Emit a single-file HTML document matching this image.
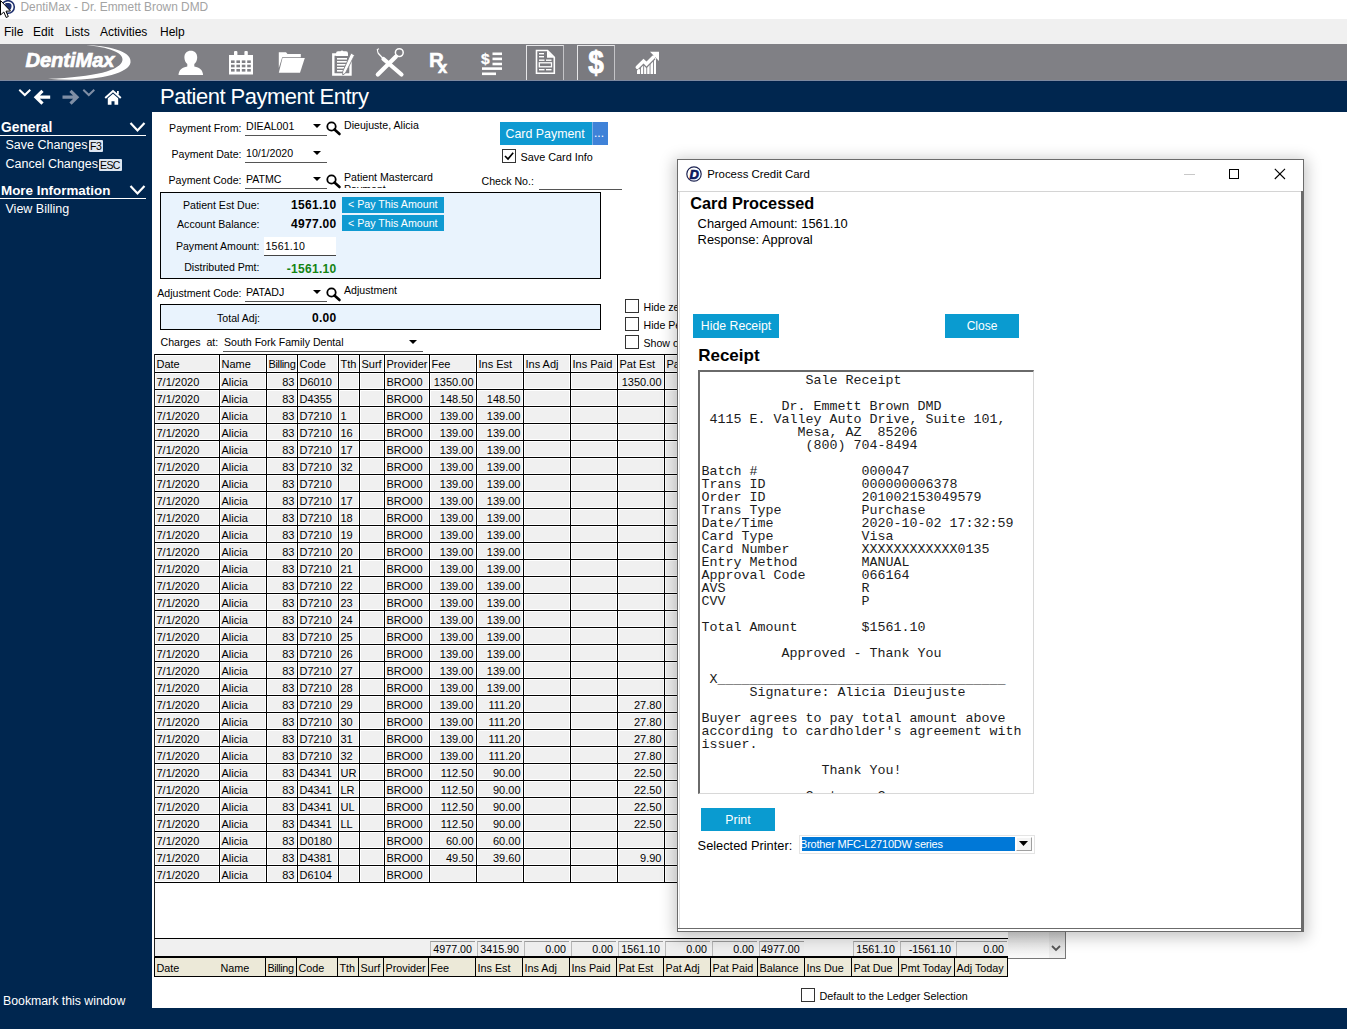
<!DOCTYPE html>
<html><head><meta charset="utf-8"><title>DentiMax</title>
<style>
html,body{margin:0;padding:0;}
body{width:1347px;height:1029px;overflow:hidden;position:relative;background:#fff;font-family:'Liberation Sans',sans-serif;}
.t{position:absolute;white-space:pre;}
.b{position:absolute;box-sizing:border-box;}
.c{position:absolute;box-sizing:border-box;height:16px;background:#f0f0f0;border:1px solid #fff;}
.g{position:absolute;white-space:pre;font-size:11px;line-height:11px;color:#000;}
svg{position:absolute;overflow:visible;}
</style></head><body>
<div class="b" style="left:0px;top:0px;width:1347px;height:19px;background:#fff;"></div>
<div class="t" style="left:20.5px;top:1.92px;font-family:'Liberation Sans', sans-serif;font-size:11.9px;line-height:11.9px;color:#a3a3a3;">DentiMax - Dr. Emmett Brown DMD</div>
<svg style="left:0;top:0" width="20" height="20" viewBox="0 0 20 20">
<circle cx="8" cy="7" r="6.3" fill="#fff" stroke="#1d2f6e" stroke-width="1.6"/>
<path d="M5.5 3 L9 3 Q12 3.5 11.5 7 Q11 10.5 7.5 11 L4 11 Z" fill="#1d2f6e"/>
<path d="M0.5 0.5 L0.5 15 L3.8 12 L6.2 17.5 L8.3 16.5 L6 11.2 L10.5 11 Z" fill="#fff" stroke="#000" stroke-width="1"/>
</svg>
<div class="b" style="left:0px;top:19px;width:1347px;height:25px;background:#f0f0f0;"></div>
<div class="t" style="left:4px;top:25.84px;font-family:'Liberation Sans', sans-serif;font-size:12px;line-height:12px;color:#000;">File</div>
<div class="t" style="left:33px;top:25.84px;font-family:'Liberation Sans', sans-serif;font-size:12px;line-height:12px;color:#000;">Edit</div>
<div class="t" style="left:65px;top:25.84px;font-family:'Liberation Sans', sans-serif;font-size:12px;line-height:12px;color:#000;">Lists</div>
<div class="t" style="left:100px;top:25.84px;font-family:'Liberation Sans', sans-serif;font-size:12px;line-height:12px;color:#000;">Activities</div>
<div class="t" style="left:160px;top:25.84px;font-family:'Liberation Sans', sans-serif;font-size:12px;line-height:12px;color:#000;">Help</div>
<div class="b" style="left:0px;top:44px;width:1347px;height:36px;background:#808085;"></div>
<div class="b" style="left:0px;top:80px;width:1347px;height:949px;background:#00264f;"></div>
<div class="b" style="left:0px;top:80px;width:1347px;height:1px;background:#7c89a0;"></div>
<div class="b" style="left:0px;top:81px;width:1347px;height:1px;background:#02214a;"></div>
<div class="b" style="left:152px;top:112px;width:1195px;height:896px;background:#fff;"></div>
<svg style="left:0;top:44px" width="150" height="36" viewBox="0 44 150 36">
<path d="M48 78.8 C 90 82.5, 128.5 75, 130.5 62.5 C 132 53, 116 46.5, 86 45 C 108 47, 123.5 52.5, 122.5 60 C 121 70.5, 95 77, 48 78.8 Z" fill="#fff"/>
<text x="25.5" y="66.5" font-family="Liberation Sans" font-weight="700" font-style="italic" font-size="20" fill="#fff" stroke="#fff" stroke-width="0.7" letter-spacing="-0.1" textLength="89" lengthAdjust="spacingAndGlyphs">DentiMax</text>
</svg>
<svg style="left:178px;top:50px" width="26" height="26" viewBox="0 0 26 26">
<path d="M0.5 25 C 0.8 20, 4 17.3, 9.3 16.5 L 9.3 14 C 7.5 12.5, 6.4 10, 6.4 7.5 C 6.4 3.2, 9 0.8, 12.8 0.8 C 16.6 0.8, 19.2 3.2, 19.2 7.5 C 19.2 10, 18.1 12.5, 16.3 14 L 16.3 16.5 C 21.6 17.3, 24.8 20, 25.1 25 Z" fill="#fff"/>
</svg>
<svg style="left:229px;top:51px" width="25" height="24" viewBox="0 0 25 24"><rect x="0" y="4" width="24" height="19.5" fill="#fff"/><rect x="5" y="0" width="3.4" height="5" rx="1" fill="#fff"/><rect x="15.4" y="0" width="3.4" height="5" rx="1" fill="#fff"/><rect x="2.0" y="9.4" width="3.6" height="2.6" fill="#808085"/><rect x="7.4" y="9.4" width="3.6" height="2.6" fill="#808085"/><rect x="12.8" y="9.4" width="3.6" height="2.6" fill="#808085"/><rect x="18.2" y="9.4" width="3.6" height="2.6" fill="#808085"/><rect x="2.0" y="13.7" width="3.6" height="2.6" fill="#808085"/><rect x="7.4" y="13.7" width="3.6" height="2.6" fill="#808085"/><rect x="12.8" y="13.7" width="3.6" height="2.6" fill="#808085"/><rect x="18.2" y="13.7" width="3.6" height="2.6" fill="#808085"/><rect x="2.0" y="18.0" width="3.6" height="2.6" fill="#808085"/><rect x="7.4" y="18.0" width="3.6" height="2.6" fill="#808085"/><rect x="12.8" y="18.0" width="3.6" height="2.6" fill="#808085"/><rect x="18.2" y="18.0" width="3.6" height="2.6" fill="#808085"/></svg>
<svg style="left:278px;top:52px" width="28" height="22" viewBox="0 0 28 22">
<path d="M0.8 0.3 L8 0.3 L9.5 2 L22.8 2 L22.8 5.2 L4.2 5.2 L0.8 16 Z" fill="#fff"/>
<path d="M4.5 6 L26.8 6 L22 20.7 L0.8 20.7 Z" fill="#fff"/>
</svg>
<svg style="left:331px;top:49px" width="24" height="28" viewBox="0 0 24 28">
<path d="M19.5 12 L19.5 25.5 L2.3 25.5 L2.3 5.5 L5 5.5" fill="none" stroke="#fff" stroke-width="2.4"/>
<path d="M5 4.5 Q5 2.3 7 2.3 L9.5 2.3 Q11 0.5 12.5 2.3 L15 2.3 Q17 2.3 17 4.5 L17 7 L5 7 Z" fill="#fff"/>
<rect x="6" y="9" width="10" height="1.6" fill="#fff"/><rect x="6" y="12" width="10" height="1.6" fill="#fff"/>
<rect x="6" y="15" width="10" height="1.6" fill="#fff"/><rect x="6" y="18" width="9" height="1.6" fill="#fff"/><rect x="6" y="21" width="8" height="1.6" fill="#fff"/>
<path d="M20 4 L23.5 6.2 L14.5 24 L11.8 26 L11.6 22.8 Z" fill="#fff" stroke="#808085" stroke-width="0.9"/>
</svg>
<svg style="left:375px;top:48px" width="30" height="30" viewBox="0 0 30 30">
<path d="M2.8 26.5 L21 8.5" stroke="#fff" stroke-width="4.2" stroke-linecap="round"/>
<path d="M8.5 11 L26.5 26.5" stroke="#fff" stroke-width="4.2" stroke-linecap="round"/>
<path d="M8.5 11 L3 5" stroke="#fff" stroke-width="1.3"/>
<path d="M3 5 L2.3 1.5 L4 0.8" stroke="#fff" stroke-width="1.1" fill="none"/>
<path d="M21 8.5 L22 7.5" stroke="#fff" stroke-width="1.5"/>
<circle cx="24.3" cy="4.6" r="3.9" fill="none" stroke="#fff" stroke-width="1.5"/>
</svg>
<svg style="left:428px;top:50px" width="26" height="26" viewBox="0 0 26 26">
<text x="1" y="16.7" font-family="Liberation Sans" font-weight="700" font-size="20.5" fill="#fff" stroke="#fff" stroke-width="0.5">R</text>
<text x="10" y="23" font-family="Liberation Sans" font-weight="700" font-size="16.5" fill="#fff" stroke="#fff" stroke-width="0.6">x</text>
</svg>
<svg style="left:480px;top:49px" width="24" height="28" viewBox="0 0 24 28">
<text x="1" y="15.2" font-family="Liberation Sans" font-weight="700" font-size="15.5" fill="#fff" stroke="#fff" stroke-width="0.3">$</text>
<rect x="12.5" y="3.5" width="9.5" height="2.6" fill="#fff"/><rect x="12.5" y="8.6" width="9.5" height="2.6" fill="#fff"/><rect x="12.5" y="13.7" width="9.5" height="2.6" fill="#fff"/>
<rect x="2" y="18.3" width="20" height="2.6" fill="#fff"/><rect x="2" y="23.5" width="14" height="2.6" fill="#fff"/>
</svg>
<div class="b" style="left:526px;top:45px;width:38px;height:35px;background:#7a7a7f;border-left:1px solid #e6e6e8;border-top:1px solid #e6e6e8;border-right:1px solid #c4c4c7;"></div>
<div class="b" style="left:577px;top:45px;width:38px;height:35px;background:#7a7a7f;border-left:1px solid #e6e6e8;border-top:1px solid #e6e6e8;border-right:1px solid #c4c4c7;"></div>
<svg style="left:535px;top:49px" width="22" height="26" viewBox="0 0 22 26">
<path d="M1.5 1.5 L12.5 1.5 L19.3 8.3 L19.3 24.3 L1.5 24.3 Z" fill="none" stroke="#fff" stroke-width="1.6"/>
<path d="M12 1.5 L19.3 8.8 L12 8.8 Z" fill="#fff"/>
<rect x="4" y="4" width="5" height="1.4" fill="#fff"/><rect x="4" y="7" width="5" height="1.4" fill="#fff"/>
<rect x="4" y="10.5" width="5.5" height="1.4" fill="#fff"/><rect x="11" y="10.5" width="5.5" height="1.4" fill="#fff"/>
<rect x="4.3" y="13.8" width="12.2" height="4" fill="none" stroke="#fff" stroke-width="1.3"/>
<rect x="4" y="20" width="5.5" height="1.4" fill="#fff"/><rect x="11" y="20" width="5.5" height="1.4" fill="#fff"/>
</svg>
<svg style="left:586.5px;top:46px" width="22" height="34" viewBox="0 0 22 34">
<text x="1.2" y="26.5" font-family="Liberation Sans" font-weight="700" font-size="31" fill="#fff" stroke="#fff" stroke-width="0.9" textLength="15.5" lengthAdjust="spacingAndGlyphs">$</text>
</svg>
<svg style="left:634px;top:50px" width="27" height="26" viewBox="634 50 27 26">
<path d="M637 74 L637 70.5 L643.5 64 L646.5 67 L656 57.5 L656 74 Z" fill="#fff"/>
<rect x="640" y="62" width="0.9" height="13" fill="#808085"/><rect x="643.2" y="62" width="0.9" height="13" fill="#808085"/>
<rect x="646.3" y="62" width="0.9" height="13" fill="#808085"/><rect x="649.6" y="58" width="0.9" height="17" fill="#808085"/><rect x="653" y="56" width="0.9" height="19" fill="#808085"/>
<path d="M637.3 67.5 L643.5 61.3 L646.5 64.3 L653.5 57.3" stroke="#808085" stroke-width="5.5" fill="none"/>
<path d="M637.3 67.3 L643.5 61.1 L646.5 64.1 L653.5 57.1" stroke="#fff" stroke-width="3.5" fill="none" stroke-linecap="round"/>
<path d="M650 51.8 L659 51.8 L659 61 Z" fill="#fff"/>
</svg>
<svg style="left:15px;top:86px" width="110" height="22" viewBox="0 0 110 22">
<path d="M4.3 3.8 L9.8 9 L15.3 3.8" stroke="#fff" stroke-width="2" fill="none"/>
<path d="M35.2 11.2 L21.5 11.2 M27.5 4.8 L21 11.2 L27.5 17.6" stroke="#fff" stroke-width="3.2" fill="none"/>
<path d="M47.5 11.2 L61.5 11.2 M55.5 4.8 L62 11.2 L55.5 17.6" stroke="#7f8ea5" stroke-width="3.2" fill="none"/>
<path d="M68.3 3.8 L73.8 9 L79.3 3.8" stroke="#7f8ea5" stroke-width="2" fill="none"/>
<path d="M90.2 12 L98 5 L105.8 12" stroke="#fff" stroke-width="2" fill="none"/>
<path d="M92.8 12.3 L98 7.8 L103.2 12.3 L103.2 18.8 L99.5 18.8 L99.5 15.3 L96.5 15.3 L96.5 18.8 L92.8 18.8 Z" fill="#fff"/>
<rect x="102" y="5" width="1.8" height="3.5" fill="#fff"/>
</svg>
<div class="t" style="left:160px;top:85.97px;font-family:'Liberation Sans', sans-serif;font-size:22px;line-height:22px;color:#fff;letter-spacing:-0.5px;">Patient Payment Entry</div>
<div class="t" style="left:1px;top:120.91px;font-family:'Liberation Sans', sans-serif;font-size:13.8px;line-height:13.8px;color:#fff;font-weight:700;">General</div>
<div class="b" style="left:0px;top:135px;width:146px;height:1px;background:#fff;"></div>
<svg style="left:129px;top:121px" width="18" height="12" viewBox="0 0 18 12"><path d="M1.5 2 L8.5 9.5 L15.5 2" stroke="#fff" stroke-width="2.2" fill="none"/></svg>
<div class="t" style="left:5.5px;top:139.11px;font-family:'Liberation Sans', sans-serif;font-size:12.5px;line-height:12.5px;color:#fff;">Save Changes</div>
<div class="b" style="left:89px;top:140px;width:14px;height:12px;background:#dde5f0;border-radius:1px;"></div>
<div class="t" style="left:90px;top:141.11px;font-family:'Liberation Sans', sans-serif;font-size:10.5px;line-height:10.5px;color:#000;letter-spacing:-0.5px;">F3</div>
<div class="t" style="left:5.5px;top:158.41px;font-family:'Liberation Sans', sans-serif;font-size:12.5px;line-height:12.5px;color:#fff;">Cancel Changes</div>
<div class="b" style="left:99px;top:159px;width:23px;height:12px;background:#dde5f0;border-radius:1px;"></div>
<div class="t" style="left:100px;top:160.11px;font-family:'Liberation Sans', sans-serif;font-size:10.5px;line-height:10.5px;color:#000;letter-spacing:-0.6px;">ESC</div>
<div class="t" style="left:1px;top:184.15px;font-family:'Liberation Sans', sans-serif;font-size:13.4px;line-height:13.4px;color:#fff;font-weight:700;">More Information</div>
<div class="b" style="left:0px;top:198px;width:146px;height:1px;background:#fff;"></div>
<svg style="left:129px;top:184px" width="18" height="12" viewBox="0 0 18 12"><path d="M1.5 2 L8.5 9.5 L15.5 2" stroke="#fff" stroke-width="2.2" fill="none"/></svg>
<div class="t" style="left:5.5px;top:202.61px;font-family:'Liberation Sans', sans-serif;font-size:12.5px;line-height:12.5px;color:#fff;">View Billing</div>
<div class="t" style="left:3px;top:994.58px;font-family:'Liberation Sans', sans-serif;font-size:12.3px;line-height:12.3px;color:#fff;">Bookmark this window</div>
<div class="t" style="left:151.5px;width:90px;text-align:right;top:123.32px;font-family:'Liberation Sans', sans-serif;font-size:10.6px;line-height:10.6px;color:#000;">Payment From:</div>
<div class="t" style="left:246px;top:121.22px;font-family:'Liberation Sans', sans-serif;font-size:10.6px;line-height:10.6px;color:#000;">DIEAL001</div>
<div class="b" style="left:245px;top:135px;width:82px;height:1px;background:#555;"></div>
<svg style="left:313.0px;top:124.0px" width="8" height="4" viewBox="0 0 8 4"><path d="M0 0 L8 0 L4.0 4 Z" fill="#000"/></svg>
<svg style="left:326px;top:121px" width="15" height="14" viewBox="0 0 15 14"><circle cx="5.5" cy="5.5" r="4.2" fill="none" stroke="#000" stroke-width="1.8"/><path d="M8.5 8.5 L13.5 13" stroke="#000" stroke-width="2.6" stroke-linecap="round"/></svg>
<div class="t" style="left:344px;top:120.02px;font-family:'Liberation Sans', sans-serif;font-size:10.6px;line-height:10.6px;color:#000;">Dieujuste, Alicia</div>
<div class="t" style="left:151.5px;width:90px;text-align:right;top:149.02px;font-family:'Liberation Sans', sans-serif;font-size:10.6px;line-height:10.6px;color:#000;">Payment Date:</div>
<div class="t" style="left:246px;top:148.32px;font-family:'Liberation Sans', sans-serif;font-size:10.6px;line-height:10.6px;color:#000;">10/1/2020</div>
<div class="b" style="left:245px;top:162px;width:82px;height:1px;background:#555;"></div>
<svg style="left:313.0px;top:151.0px" width="8" height="4" viewBox="0 0 8 4"><path d="M0 0 L8 0 L4.0 4 Z" fill="#000"/></svg>
<div class="t" style="left:151.5px;width:90px;text-align:right;top:175.02px;font-family:'Liberation Sans', sans-serif;font-size:10.6px;line-height:10.6px;color:#000;">Payment Code:</div>
<div class="t" style="left:246px;top:174.22px;font-family:'Liberation Sans', sans-serif;font-size:10.6px;line-height:10.6px;color:#000;">PATMC</div>
<div class="b" style="left:245px;top:188px;width:82px;height:1px;background:#555;"></div>
<svg style="left:313.0px;top:177.0px" width="8" height="4" viewBox="0 0 8 4"><path d="M0 0 L8 0 L4.0 4 Z" fill="#000"/></svg>
<svg style="left:326px;top:174px" width="15" height="14" viewBox="0 0 15 14"><circle cx="5.5" cy="5.5" r="4.2" fill="none" stroke="#000" stroke-width="1.8"/><path d="M8.5 8.5 L13.5 13" stroke="#000" stroke-width="2.6" stroke-linecap="round"/></svg>
<div class="b" style="left:344px;top:170px;width:110px;height:18px;overflow:hidden;"><div class="t" style="left:0px;top:1.82px;font-family:'Liberation Sans', sans-serif;font-size:10.6px;line-height:10.6px;color:#000;">Patient Mastercard</div>
<div class="t" style="left:0px;top:13.62px;font-family:'Liberation Sans', sans-serif;font-size:10.6px;line-height:10.6px;color:#000;">Payment</div>
</div>
<div class="b" style="left:500px;top:122px;width:92px;height:23px;background:#0f9ad2;"></div>
<div class="b" style="left:592px;top:122px;width:16px;height:23px;background:#3f82d8;border-left:1px solid #7fb0e6;"></div>
<div class="t" style="left:505.5px;top:127.50px;font-family:'Liberation Sans', sans-serif;font-size:12.4px;line-height:12.4px;color:#fff;">Card Payment</div>
<div class="t" style="left:594px;top:127.34px;font-family:'Liberation Sans', sans-serif;font-size:12px;line-height:12px;color:#fff;">...</div>
<div class="b" style="left:502px;top:149px;width:14px;height:14px;background:#fff;border:1px solid #333;"></div>
<svg style="left:504px;top:151px" width="10" height="10" viewBox="0 0 10 10"><path d="M1 5 L4 8 L9.2 1.8" stroke="#000" stroke-width="1.7" fill="none"/></svg>
<div class="t" style="left:520.5px;top:152.11px;font-family:'Liberation Sans', sans-serif;font-size:10.85px;line-height:10.85px;color:#000;">Save Card Info</div>
<div class="t" style="left:481.5px;top:175.72px;font-family:'Liberation Sans', sans-serif;font-size:10.6px;line-height:10.6px;color:#000;">Check No.:</div>
<div class="b" style="left:539px;top:189px;width:83px;height:1px;background:#555;"></div>
<div class="b" style="left:160px;top:192px;width:441px;height:87px;background:#e9f3fd;border:1px solid #000;"></div>
<div class="t" style="left:159.5px;width:100px;text-align:right;top:199.82px;font-family:'Liberation Sans', sans-serif;font-size:10.6px;line-height:10.6px;color:#000;">Patient Est Due:</div>
<div class="t" style="left:256.5px;width:80px;text-align:right;top:199.44px;font-family:'Liberation Sans', sans-serif;font-size:12px;line-height:12px;color:#000;font-weight:700;letter-spacing:0.3px;">1561.10</div>
<div class="b" style="left:342px;top:197px;width:102px;height:16px;background:#0f9ad2;"></div>
<div class="t" style="left:348px;top:199.47px;font-family:'Liberation Sans', sans-serif;font-size:10.66px;line-height:10.66px;color:#fff;">&lt; Pay This Amount</div>
<div class="t" style="left:159.5px;width:100px;text-align:right;top:218.82px;font-family:'Liberation Sans', sans-serif;font-size:10.6px;line-height:10.6px;color:#000;">Account Balance:</div>
<div class="t" style="left:256.5px;width:80px;text-align:right;top:218.44px;font-family:'Liberation Sans', sans-serif;font-size:12px;line-height:12px;color:#000;font-weight:700;letter-spacing:0.3px;">4977.00</div>
<div class="b" style="left:342px;top:215px;width:102px;height:16px;background:#0f9ad2;"></div>
<div class="t" style="left:348px;top:218.27px;font-family:'Liberation Sans', sans-serif;font-size:10.66px;line-height:10.66px;color:#fff;">&lt; Pay This Amount</div>
<div class="t" style="left:159.5px;width:100px;text-align:right;top:240.62px;font-family:'Liberation Sans', sans-serif;font-size:10.6px;line-height:10.6px;color:#000;">Payment Amount:</div>
<div class="b" style="left:264px;top:237px;width:72px;height:19px;background:#fff;border-bottom:1px solid #444;"></div>
<div class="t" style="left:265.5px;top:241.32px;font-family:'Liberation Sans', sans-serif;font-size:10.6px;line-height:10.6px;color:#000;letter-spacing:0.2px;">1561.10</div>
<div class="t" style="left:159.5px;width:100px;text-align:right;top:261.72px;font-family:'Liberation Sans', sans-serif;font-size:10.6px;line-height:10.6px;color:#000;">Distributed Pmt:</div>
<div class="t" style="left:256.5px;width:80px;text-align:right;top:263.04px;font-family:'Liberation Sans', sans-serif;font-size:12px;line-height:12px;color:#138413;font-weight:700;letter-spacing:0.3px;">-1561.10</div>
<div class="t" style="left:141.5px;width:100px;text-align:right;top:287.72px;font-family:'Liberation Sans', sans-serif;font-size:10.6px;line-height:10.6px;color:#000;">Adjustment Code:</div>
<div class="t" style="left:246px;top:287.02px;font-family:'Liberation Sans', sans-serif;font-size:10.6px;line-height:10.6px;color:#000;">PATADJ</div>
<div class="b" style="left:245px;top:301px;width:82px;height:1px;background:#555;"></div>
<svg style="left:313.0px;top:290.0px" width="8" height="4" viewBox="0 0 8 4"><path d="M0 0 L8 0 L4.0 4 Z" fill="#000"/></svg>
<svg style="left:326px;top:287px" width="15" height="14" viewBox="0 0 15 14"><circle cx="5.5" cy="5.5" r="4.2" fill="none" stroke="#000" stroke-width="1.8"/><path d="M8.5 8.5 L13.5 13" stroke="#000" stroke-width="2.6" stroke-linecap="round"/></svg>
<div class="t" style="left:344px;top:284.82px;font-family:'Liberation Sans', sans-serif;font-size:10.6px;line-height:10.6px;color:#000;">Adjustment</div>
<div class="b" style="left:160px;top:304px;width:441px;height:26px;background:#e9f3fd;border:1px solid #000;"></div>
<div class="t" style="left:160px;width:100px;text-align:right;top:312.92px;font-family:'Liberation Sans', sans-serif;font-size:10.6px;line-height:10.6px;color:#000;">Total Adj:</div>
<div class="t" style="left:256.5px;width:80px;text-align:right;top:312.44px;font-family:'Liberation Sans', sans-serif;font-size:12px;line-height:12px;color:#000;font-weight:700;letter-spacing:0.3px;">0.00</div>
<div class="t" style="left:160.5px;top:336.72px;font-family:'Liberation Sans', sans-serif;font-size:10.6px;line-height:10.6px;color:#000;">Charges  at:</div>
<div class="b" style="left:223px;top:351px;width:200px;height:1px;background:#555;"></div>
<div class="t" style="left:224px;top:336.72px;font-family:'Liberation Sans', sans-serif;font-size:10.6px;line-height:10.6px;color:#000;">South Fork Family Dental</div>
<svg style="left:409.0px;top:340.0px" width="8" height="4" viewBox="0 0 8 4"><path d="M0 0 L8 0 L4.0 4 Z" fill="#000"/></svg>
<div class="b" style="left:625px;top:299px;width:14px;height:14px;background:#fff;border:1px solid #333;"></div>
<div class="t" style="left:643.5px;top:301.82px;font-family:'Liberation Sans', sans-serif;font-size:10.6px;line-height:10.6px;color:#000;">Hide zero balance</div>
<div class="b" style="left:625px;top:317px;width:14px;height:14px;background:#fff;border:1px solid #333;"></div>
<div class="t" style="left:643.5px;top:319.82px;font-family:'Liberation Sans', sans-serif;font-size:10.6px;line-height:10.6px;color:#000;">Hide Pending</div>
<div class="b" style="left:625px;top:335px;width:14px;height:14px;background:#fff;border:1px solid #333;"></div>
<div class="t" style="left:643.5px;top:337.82px;font-family:'Liberation Sans', sans-serif;font-size:10.6px;line-height:10.6px;color:#000;">Show only</div>
<div class="b" style="left:154px;top:354px;width:855px;height:529px;background:#000;"><div class="c" style="left:1px;top:1px;width:64px;height:17px"></div><div class="g" style="left:2.5px;top:4.59px;">Date</div><div class="c" style="left:66px;top:1px;width:46px;height:17px"></div><div class="g" style="left:67.5px;top:4.59px;">Name</div><div class="c" style="left:113px;top:1px;width:30px;height:17px"></div><div class="g" style="left:114.5px;top:4.59px;letter-spacing:-0.35px;">Billing</div><div class="c" style="left:144px;top:1px;width:40px;height:17px"></div><div class="g" style="left:145.5px;top:4.59px;">Code</div><div class="c" style="left:185px;top:1px;width:20px;height:17px"></div><div class="g" style="left:186.5px;top:4.59px;">Tth</div><div class="c" style="left:206px;top:1px;width:24px;height:17px"></div><div class="g" style="left:207.5px;top:4.59px;">Surf</div><div class="c" style="left:231px;top:1px;width:44px;height:17px"></div><div class="g" style="left:232.5px;top:4.59px;">Provider</div><div class="c" style="left:276px;top:1px;width:46px;height:17px"></div><div class="g" style="left:277.5px;top:4.59px;">Fee</div><div class="c" style="left:323px;top:1px;width:46px;height:17px"></div><div class="g" style="left:324.5px;top:4.59px;">Ins Est</div><div class="c" style="left:370px;top:1px;width:46px;height:17px"></div><div class="g" style="left:371.5px;top:4.59px;">Ins Adj</div><div class="c" style="left:417px;top:1px;width:46px;height:17px"></div><div class="g" style="left:418.5px;top:4.59px;">Ins Paid</div><div class="c" style="left:464px;top:1px;width:46px;height:17px"></div><div class="g" style="left:465.5px;top:4.59px;">Pat Est</div><div class="c" style="left:511px;top:1px;width:46px;height:17px"></div><div class="g" style="left:512.5px;top:4.59px;">Pat Adj</div><div class="c" style="left:558px;top:1px;width:46px;height:17px"></div><div class="g" style="left:559.5px;top:4.59px;">Pat Paid</div><div class="c" style="left:605px;top:1px;width:46px;height:17px"></div><div class="g" style="left:606.5px;top:4.59px;">Balance</div><div class="c" style="left:652px;top:1px;width:46px;height:17px"></div><div class="g" style="left:653.5px;top:4.59px;">Ins Due</div><div class="c" style="left:699px;top:1px;width:46px;height:17px"></div><div class="g" style="left:700.5px;top:4.59px;">Pat Due</div><div class="c" style="left:746px;top:1px;width:55px;height:17px"></div><div class="g" style="left:747.5px;top:4.59px;">Pmt Today</div><div class="c" style="left:802px;top:1px;width:52px;height:17px"></div><div class="g" style="left:803.5px;top:4.59px;">Adj Today</div><div class="c" style="left:1px;top:19px;width:64px"></div><div class="g" style="left:2.5px;top:23.49px;">7/1/2020</div><div class="c" style="left:66px;top:19px;width:46px"></div><div class="g" style="left:67.5px;top:23.49px;">Alicia</div><div class="c" style="left:113px;top:19px;width:30px"></div><div class="g" style="left:113px;width:27.5px;text-align:right;top:23.49px">83</div><div class="c" style="left:144px;top:19px;width:40px"></div><div class="g" style="left:145.5px;top:23.49px;">D6010</div><div class="c" style="left:185px;top:19px;width:20px"></div><div class="c" style="left:206px;top:19px;width:24px"></div><div class="c" style="left:231px;top:19px;width:44px"></div><div class="g" style="left:232.5px;top:23.49px;">BRO00</div><div class="c" style="left:276px;top:19px;width:46px"></div><div class="g" style="left:276px;width:43.5px;text-align:right;top:23.49px">1350.00</div><div class="c" style="left:323px;top:19px;width:46px"></div><div class="c" style="left:370px;top:19px;width:46px"></div><div class="c" style="left:417px;top:19px;width:46px"></div><div class="c" style="left:464px;top:19px;width:46px"></div><div class="g" style="left:464px;width:43.5px;text-align:right;top:23.49px">1350.00</div><div class="c" style="left:511px;top:19px;width:46px"></div><div class="c" style="left:558px;top:19px;width:46px"></div><div class="c" style="left:605px;top:19px;width:46px"></div><div class="c" style="left:652px;top:19px;width:46px"></div><div class="c" style="left:699px;top:19px;width:46px"></div><div class="c" style="left:746px;top:19px;width:55px"></div><div class="c" style="left:802px;top:19px;width:52px"></div><div class="c" style="left:1px;top:36px;width:64px"></div><div class="g" style="left:2.5px;top:40.49px;">7/1/2020</div><div class="c" style="left:66px;top:36px;width:46px"></div><div class="g" style="left:67.5px;top:40.49px;">Alicia</div><div class="c" style="left:113px;top:36px;width:30px"></div><div class="g" style="left:113px;width:27.5px;text-align:right;top:40.49px">83</div><div class="c" style="left:144px;top:36px;width:40px"></div><div class="g" style="left:145.5px;top:40.49px;">D4355</div><div class="c" style="left:185px;top:36px;width:20px"></div><div class="c" style="left:206px;top:36px;width:24px"></div><div class="c" style="left:231px;top:36px;width:44px"></div><div class="g" style="left:232.5px;top:40.49px;">BRO00</div><div class="c" style="left:276px;top:36px;width:46px"></div><div class="g" style="left:276px;width:43.5px;text-align:right;top:40.49px">148.50</div><div class="c" style="left:323px;top:36px;width:46px"></div><div class="g" style="left:323px;width:43.5px;text-align:right;top:40.49px">148.50</div><div class="c" style="left:370px;top:36px;width:46px"></div><div class="c" style="left:417px;top:36px;width:46px"></div><div class="c" style="left:464px;top:36px;width:46px"></div><div class="c" style="left:511px;top:36px;width:46px"></div><div class="c" style="left:558px;top:36px;width:46px"></div><div class="c" style="left:605px;top:36px;width:46px"></div><div class="c" style="left:652px;top:36px;width:46px"></div><div class="c" style="left:699px;top:36px;width:46px"></div><div class="c" style="left:746px;top:36px;width:55px"></div><div class="c" style="left:802px;top:36px;width:52px"></div><div class="c" style="left:1px;top:53px;width:64px"></div><div class="g" style="left:2.5px;top:57.49px;">7/1/2020</div><div class="c" style="left:66px;top:53px;width:46px"></div><div class="g" style="left:67.5px;top:57.49px;">Alicia</div><div class="c" style="left:113px;top:53px;width:30px"></div><div class="g" style="left:113px;width:27.5px;text-align:right;top:57.49px">83</div><div class="c" style="left:144px;top:53px;width:40px"></div><div class="g" style="left:145.5px;top:57.49px;">D7210</div><div class="c" style="left:185px;top:53px;width:20px"></div><div class="g" style="left:186.5px;top:57.49px;">1</div><div class="c" style="left:206px;top:53px;width:24px"></div><div class="c" style="left:231px;top:53px;width:44px"></div><div class="g" style="left:232.5px;top:57.49px;">BRO00</div><div class="c" style="left:276px;top:53px;width:46px"></div><div class="g" style="left:276px;width:43.5px;text-align:right;top:57.49px">139.00</div><div class="c" style="left:323px;top:53px;width:46px"></div><div class="g" style="left:323px;width:43.5px;text-align:right;top:57.49px">139.00</div><div class="c" style="left:370px;top:53px;width:46px"></div><div class="c" style="left:417px;top:53px;width:46px"></div><div class="c" style="left:464px;top:53px;width:46px"></div><div class="c" style="left:511px;top:53px;width:46px"></div><div class="c" style="left:558px;top:53px;width:46px"></div><div class="c" style="left:605px;top:53px;width:46px"></div><div class="c" style="left:652px;top:53px;width:46px"></div><div class="c" style="left:699px;top:53px;width:46px"></div><div class="c" style="left:746px;top:53px;width:55px"></div><div class="c" style="left:802px;top:53px;width:52px"></div><div class="c" style="left:1px;top:70px;width:64px"></div><div class="g" style="left:2.5px;top:74.49px;">7/1/2020</div><div class="c" style="left:66px;top:70px;width:46px"></div><div class="g" style="left:67.5px;top:74.49px;">Alicia</div><div class="c" style="left:113px;top:70px;width:30px"></div><div class="g" style="left:113px;width:27.5px;text-align:right;top:74.49px">83</div><div class="c" style="left:144px;top:70px;width:40px"></div><div class="g" style="left:145.5px;top:74.49px;">D7210</div><div class="c" style="left:185px;top:70px;width:20px"></div><div class="g" style="left:186.5px;top:74.49px;">16</div><div class="c" style="left:206px;top:70px;width:24px"></div><div class="c" style="left:231px;top:70px;width:44px"></div><div class="g" style="left:232.5px;top:74.49px;">BRO00</div><div class="c" style="left:276px;top:70px;width:46px"></div><div class="g" style="left:276px;width:43.5px;text-align:right;top:74.49px">139.00</div><div class="c" style="left:323px;top:70px;width:46px"></div><div class="g" style="left:323px;width:43.5px;text-align:right;top:74.49px">139.00</div><div class="c" style="left:370px;top:70px;width:46px"></div><div class="c" style="left:417px;top:70px;width:46px"></div><div class="c" style="left:464px;top:70px;width:46px"></div><div class="c" style="left:511px;top:70px;width:46px"></div><div class="c" style="left:558px;top:70px;width:46px"></div><div class="c" style="left:605px;top:70px;width:46px"></div><div class="c" style="left:652px;top:70px;width:46px"></div><div class="c" style="left:699px;top:70px;width:46px"></div><div class="c" style="left:746px;top:70px;width:55px"></div><div class="c" style="left:802px;top:70px;width:52px"></div><div class="c" style="left:1px;top:87px;width:64px"></div><div class="g" style="left:2.5px;top:91.49px;">7/1/2020</div><div class="c" style="left:66px;top:87px;width:46px"></div><div class="g" style="left:67.5px;top:91.49px;">Alicia</div><div class="c" style="left:113px;top:87px;width:30px"></div><div class="g" style="left:113px;width:27.5px;text-align:right;top:91.49px">83</div><div class="c" style="left:144px;top:87px;width:40px"></div><div class="g" style="left:145.5px;top:91.49px;">D7210</div><div class="c" style="left:185px;top:87px;width:20px"></div><div class="g" style="left:186.5px;top:91.49px;">17</div><div class="c" style="left:206px;top:87px;width:24px"></div><div class="c" style="left:231px;top:87px;width:44px"></div><div class="g" style="left:232.5px;top:91.49px;">BRO00</div><div class="c" style="left:276px;top:87px;width:46px"></div><div class="g" style="left:276px;width:43.5px;text-align:right;top:91.49px">139.00</div><div class="c" style="left:323px;top:87px;width:46px"></div><div class="g" style="left:323px;width:43.5px;text-align:right;top:91.49px">139.00</div><div class="c" style="left:370px;top:87px;width:46px"></div><div class="c" style="left:417px;top:87px;width:46px"></div><div class="c" style="left:464px;top:87px;width:46px"></div><div class="c" style="left:511px;top:87px;width:46px"></div><div class="c" style="left:558px;top:87px;width:46px"></div><div class="c" style="left:605px;top:87px;width:46px"></div><div class="c" style="left:652px;top:87px;width:46px"></div><div class="c" style="left:699px;top:87px;width:46px"></div><div class="c" style="left:746px;top:87px;width:55px"></div><div class="c" style="left:802px;top:87px;width:52px"></div><div class="c" style="left:1px;top:104px;width:64px"></div><div class="g" style="left:2.5px;top:108.49px;">7/1/2020</div><div class="c" style="left:66px;top:104px;width:46px"></div><div class="g" style="left:67.5px;top:108.49px;">Alicia</div><div class="c" style="left:113px;top:104px;width:30px"></div><div class="g" style="left:113px;width:27.5px;text-align:right;top:108.49px">83</div><div class="c" style="left:144px;top:104px;width:40px"></div><div class="g" style="left:145.5px;top:108.49px;">D7210</div><div class="c" style="left:185px;top:104px;width:20px"></div><div class="g" style="left:186.5px;top:108.49px;">32</div><div class="c" style="left:206px;top:104px;width:24px"></div><div class="c" style="left:231px;top:104px;width:44px"></div><div class="g" style="left:232.5px;top:108.49px;">BRO00</div><div class="c" style="left:276px;top:104px;width:46px"></div><div class="g" style="left:276px;width:43.5px;text-align:right;top:108.49px">139.00</div><div class="c" style="left:323px;top:104px;width:46px"></div><div class="g" style="left:323px;width:43.5px;text-align:right;top:108.49px">139.00</div><div class="c" style="left:370px;top:104px;width:46px"></div><div class="c" style="left:417px;top:104px;width:46px"></div><div class="c" style="left:464px;top:104px;width:46px"></div><div class="c" style="left:511px;top:104px;width:46px"></div><div class="c" style="left:558px;top:104px;width:46px"></div><div class="c" style="left:605px;top:104px;width:46px"></div><div class="c" style="left:652px;top:104px;width:46px"></div><div class="c" style="left:699px;top:104px;width:46px"></div><div class="c" style="left:746px;top:104px;width:55px"></div><div class="c" style="left:802px;top:104px;width:52px"></div><div class="c" style="left:1px;top:121px;width:64px"></div><div class="g" style="left:2.5px;top:125.49px;">7/1/2020</div><div class="c" style="left:66px;top:121px;width:46px"></div><div class="g" style="left:67.5px;top:125.49px;">Alicia</div><div class="c" style="left:113px;top:121px;width:30px"></div><div class="g" style="left:113px;width:27.5px;text-align:right;top:125.49px">83</div><div class="c" style="left:144px;top:121px;width:40px"></div><div class="g" style="left:145.5px;top:125.49px;">D7210</div><div class="c" style="left:185px;top:121px;width:20px"></div><div class="c" style="left:206px;top:121px;width:24px"></div><div class="c" style="left:231px;top:121px;width:44px"></div><div class="g" style="left:232.5px;top:125.49px;">BRO00</div><div class="c" style="left:276px;top:121px;width:46px"></div><div class="g" style="left:276px;width:43.5px;text-align:right;top:125.49px">139.00</div><div class="c" style="left:323px;top:121px;width:46px"></div><div class="g" style="left:323px;width:43.5px;text-align:right;top:125.49px">139.00</div><div class="c" style="left:370px;top:121px;width:46px"></div><div class="c" style="left:417px;top:121px;width:46px"></div><div class="c" style="left:464px;top:121px;width:46px"></div><div class="c" style="left:511px;top:121px;width:46px"></div><div class="c" style="left:558px;top:121px;width:46px"></div><div class="c" style="left:605px;top:121px;width:46px"></div><div class="c" style="left:652px;top:121px;width:46px"></div><div class="c" style="left:699px;top:121px;width:46px"></div><div class="c" style="left:746px;top:121px;width:55px"></div><div class="c" style="left:802px;top:121px;width:52px"></div><div class="c" style="left:1px;top:138px;width:64px"></div><div class="g" style="left:2.5px;top:142.49px;">7/1/2020</div><div class="c" style="left:66px;top:138px;width:46px"></div><div class="g" style="left:67.5px;top:142.49px;">Alicia</div><div class="c" style="left:113px;top:138px;width:30px"></div><div class="g" style="left:113px;width:27.5px;text-align:right;top:142.49px">83</div><div class="c" style="left:144px;top:138px;width:40px"></div><div class="g" style="left:145.5px;top:142.49px;">D7210</div><div class="c" style="left:185px;top:138px;width:20px"></div><div class="g" style="left:186.5px;top:142.49px;">17</div><div class="c" style="left:206px;top:138px;width:24px"></div><div class="c" style="left:231px;top:138px;width:44px"></div><div class="g" style="left:232.5px;top:142.49px;">BRO00</div><div class="c" style="left:276px;top:138px;width:46px"></div><div class="g" style="left:276px;width:43.5px;text-align:right;top:142.49px">139.00</div><div class="c" style="left:323px;top:138px;width:46px"></div><div class="g" style="left:323px;width:43.5px;text-align:right;top:142.49px">139.00</div><div class="c" style="left:370px;top:138px;width:46px"></div><div class="c" style="left:417px;top:138px;width:46px"></div><div class="c" style="left:464px;top:138px;width:46px"></div><div class="c" style="left:511px;top:138px;width:46px"></div><div class="c" style="left:558px;top:138px;width:46px"></div><div class="c" style="left:605px;top:138px;width:46px"></div><div class="c" style="left:652px;top:138px;width:46px"></div><div class="c" style="left:699px;top:138px;width:46px"></div><div class="c" style="left:746px;top:138px;width:55px"></div><div class="c" style="left:802px;top:138px;width:52px"></div><div class="c" style="left:1px;top:155px;width:64px"></div><div class="g" style="left:2.5px;top:159.49px;">7/1/2020</div><div class="c" style="left:66px;top:155px;width:46px"></div><div class="g" style="left:67.5px;top:159.49px;">Alicia</div><div class="c" style="left:113px;top:155px;width:30px"></div><div class="g" style="left:113px;width:27.5px;text-align:right;top:159.49px">83</div><div class="c" style="left:144px;top:155px;width:40px"></div><div class="g" style="left:145.5px;top:159.49px;">D7210</div><div class="c" style="left:185px;top:155px;width:20px"></div><div class="g" style="left:186.5px;top:159.49px;">18</div><div class="c" style="left:206px;top:155px;width:24px"></div><div class="c" style="left:231px;top:155px;width:44px"></div><div class="g" style="left:232.5px;top:159.49px;">BRO00</div><div class="c" style="left:276px;top:155px;width:46px"></div><div class="g" style="left:276px;width:43.5px;text-align:right;top:159.49px">139.00</div><div class="c" style="left:323px;top:155px;width:46px"></div><div class="g" style="left:323px;width:43.5px;text-align:right;top:159.49px">139.00</div><div class="c" style="left:370px;top:155px;width:46px"></div><div class="c" style="left:417px;top:155px;width:46px"></div><div class="c" style="left:464px;top:155px;width:46px"></div><div class="c" style="left:511px;top:155px;width:46px"></div><div class="c" style="left:558px;top:155px;width:46px"></div><div class="c" style="left:605px;top:155px;width:46px"></div><div class="c" style="left:652px;top:155px;width:46px"></div><div class="c" style="left:699px;top:155px;width:46px"></div><div class="c" style="left:746px;top:155px;width:55px"></div><div class="c" style="left:802px;top:155px;width:52px"></div><div class="c" style="left:1px;top:172px;width:64px"></div><div class="g" style="left:2.5px;top:176.49px;">7/1/2020</div><div class="c" style="left:66px;top:172px;width:46px"></div><div class="g" style="left:67.5px;top:176.49px;">Alicia</div><div class="c" style="left:113px;top:172px;width:30px"></div><div class="g" style="left:113px;width:27.5px;text-align:right;top:176.49px">83</div><div class="c" style="left:144px;top:172px;width:40px"></div><div class="g" style="left:145.5px;top:176.49px;">D7210</div><div class="c" style="left:185px;top:172px;width:20px"></div><div class="g" style="left:186.5px;top:176.49px;">19</div><div class="c" style="left:206px;top:172px;width:24px"></div><div class="c" style="left:231px;top:172px;width:44px"></div><div class="g" style="left:232.5px;top:176.49px;">BRO00</div><div class="c" style="left:276px;top:172px;width:46px"></div><div class="g" style="left:276px;width:43.5px;text-align:right;top:176.49px">139.00</div><div class="c" style="left:323px;top:172px;width:46px"></div><div class="g" style="left:323px;width:43.5px;text-align:right;top:176.49px">139.00</div><div class="c" style="left:370px;top:172px;width:46px"></div><div class="c" style="left:417px;top:172px;width:46px"></div><div class="c" style="left:464px;top:172px;width:46px"></div><div class="c" style="left:511px;top:172px;width:46px"></div><div class="c" style="left:558px;top:172px;width:46px"></div><div class="c" style="left:605px;top:172px;width:46px"></div><div class="c" style="left:652px;top:172px;width:46px"></div><div class="c" style="left:699px;top:172px;width:46px"></div><div class="c" style="left:746px;top:172px;width:55px"></div><div class="c" style="left:802px;top:172px;width:52px"></div><div class="c" style="left:1px;top:189px;width:64px"></div><div class="g" style="left:2.5px;top:193.49px;">7/1/2020</div><div class="c" style="left:66px;top:189px;width:46px"></div><div class="g" style="left:67.5px;top:193.49px;">Alicia</div><div class="c" style="left:113px;top:189px;width:30px"></div><div class="g" style="left:113px;width:27.5px;text-align:right;top:193.49px">83</div><div class="c" style="left:144px;top:189px;width:40px"></div><div class="g" style="left:145.5px;top:193.49px;">D7210</div><div class="c" style="left:185px;top:189px;width:20px"></div><div class="g" style="left:186.5px;top:193.49px;">20</div><div class="c" style="left:206px;top:189px;width:24px"></div><div class="c" style="left:231px;top:189px;width:44px"></div><div class="g" style="left:232.5px;top:193.49px;">BRO00</div><div class="c" style="left:276px;top:189px;width:46px"></div><div class="g" style="left:276px;width:43.5px;text-align:right;top:193.49px">139.00</div><div class="c" style="left:323px;top:189px;width:46px"></div><div class="g" style="left:323px;width:43.5px;text-align:right;top:193.49px">139.00</div><div class="c" style="left:370px;top:189px;width:46px"></div><div class="c" style="left:417px;top:189px;width:46px"></div><div class="c" style="left:464px;top:189px;width:46px"></div><div class="c" style="left:511px;top:189px;width:46px"></div><div class="c" style="left:558px;top:189px;width:46px"></div><div class="c" style="left:605px;top:189px;width:46px"></div><div class="c" style="left:652px;top:189px;width:46px"></div><div class="c" style="left:699px;top:189px;width:46px"></div><div class="c" style="left:746px;top:189px;width:55px"></div><div class="c" style="left:802px;top:189px;width:52px"></div><div class="c" style="left:1px;top:206px;width:64px"></div><div class="g" style="left:2.5px;top:210.49px;">7/1/2020</div><div class="c" style="left:66px;top:206px;width:46px"></div><div class="g" style="left:67.5px;top:210.49px;">Alicia</div><div class="c" style="left:113px;top:206px;width:30px"></div><div class="g" style="left:113px;width:27.5px;text-align:right;top:210.49px">83</div><div class="c" style="left:144px;top:206px;width:40px"></div><div class="g" style="left:145.5px;top:210.49px;">D7210</div><div class="c" style="left:185px;top:206px;width:20px"></div><div class="g" style="left:186.5px;top:210.49px;">21</div><div class="c" style="left:206px;top:206px;width:24px"></div><div class="c" style="left:231px;top:206px;width:44px"></div><div class="g" style="left:232.5px;top:210.49px;">BRO00</div><div class="c" style="left:276px;top:206px;width:46px"></div><div class="g" style="left:276px;width:43.5px;text-align:right;top:210.49px">139.00</div><div class="c" style="left:323px;top:206px;width:46px"></div><div class="g" style="left:323px;width:43.5px;text-align:right;top:210.49px">139.00</div><div class="c" style="left:370px;top:206px;width:46px"></div><div class="c" style="left:417px;top:206px;width:46px"></div><div class="c" style="left:464px;top:206px;width:46px"></div><div class="c" style="left:511px;top:206px;width:46px"></div><div class="c" style="left:558px;top:206px;width:46px"></div><div class="c" style="left:605px;top:206px;width:46px"></div><div class="c" style="left:652px;top:206px;width:46px"></div><div class="c" style="left:699px;top:206px;width:46px"></div><div class="c" style="left:746px;top:206px;width:55px"></div><div class="c" style="left:802px;top:206px;width:52px"></div><div class="c" style="left:1px;top:223px;width:64px"></div><div class="g" style="left:2.5px;top:227.49px;">7/1/2020</div><div class="c" style="left:66px;top:223px;width:46px"></div><div class="g" style="left:67.5px;top:227.49px;">Alicia</div><div class="c" style="left:113px;top:223px;width:30px"></div><div class="g" style="left:113px;width:27.5px;text-align:right;top:227.49px">83</div><div class="c" style="left:144px;top:223px;width:40px"></div><div class="g" style="left:145.5px;top:227.49px;">D7210</div><div class="c" style="left:185px;top:223px;width:20px"></div><div class="g" style="left:186.5px;top:227.49px;">22</div><div class="c" style="left:206px;top:223px;width:24px"></div><div class="c" style="left:231px;top:223px;width:44px"></div><div class="g" style="left:232.5px;top:227.49px;">BRO00</div><div class="c" style="left:276px;top:223px;width:46px"></div><div class="g" style="left:276px;width:43.5px;text-align:right;top:227.49px">139.00</div><div class="c" style="left:323px;top:223px;width:46px"></div><div class="g" style="left:323px;width:43.5px;text-align:right;top:227.49px">139.00</div><div class="c" style="left:370px;top:223px;width:46px"></div><div class="c" style="left:417px;top:223px;width:46px"></div><div class="c" style="left:464px;top:223px;width:46px"></div><div class="c" style="left:511px;top:223px;width:46px"></div><div class="c" style="left:558px;top:223px;width:46px"></div><div class="c" style="left:605px;top:223px;width:46px"></div><div class="c" style="left:652px;top:223px;width:46px"></div><div class="c" style="left:699px;top:223px;width:46px"></div><div class="c" style="left:746px;top:223px;width:55px"></div><div class="c" style="left:802px;top:223px;width:52px"></div><div class="c" style="left:1px;top:240px;width:64px"></div><div class="g" style="left:2.5px;top:244.49px;">7/1/2020</div><div class="c" style="left:66px;top:240px;width:46px"></div><div class="g" style="left:67.5px;top:244.49px;">Alicia</div><div class="c" style="left:113px;top:240px;width:30px"></div><div class="g" style="left:113px;width:27.5px;text-align:right;top:244.49px">83</div><div class="c" style="left:144px;top:240px;width:40px"></div><div class="g" style="left:145.5px;top:244.49px;">D7210</div><div class="c" style="left:185px;top:240px;width:20px"></div><div class="g" style="left:186.5px;top:244.49px;">23</div><div class="c" style="left:206px;top:240px;width:24px"></div><div class="c" style="left:231px;top:240px;width:44px"></div><div class="g" style="left:232.5px;top:244.49px;">BRO00</div><div class="c" style="left:276px;top:240px;width:46px"></div><div class="g" style="left:276px;width:43.5px;text-align:right;top:244.49px">139.00</div><div class="c" style="left:323px;top:240px;width:46px"></div><div class="g" style="left:323px;width:43.5px;text-align:right;top:244.49px">139.00</div><div class="c" style="left:370px;top:240px;width:46px"></div><div class="c" style="left:417px;top:240px;width:46px"></div><div class="c" style="left:464px;top:240px;width:46px"></div><div class="c" style="left:511px;top:240px;width:46px"></div><div class="c" style="left:558px;top:240px;width:46px"></div><div class="c" style="left:605px;top:240px;width:46px"></div><div class="c" style="left:652px;top:240px;width:46px"></div><div class="c" style="left:699px;top:240px;width:46px"></div><div class="c" style="left:746px;top:240px;width:55px"></div><div class="c" style="left:802px;top:240px;width:52px"></div><div class="c" style="left:1px;top:257px;width:64px"></div><div class="g" style="left:2.5px;top:261.49px;">7/1/2020</div><div class="c" style="left:66px;top:257px;width:46px"></div><div class="g" style="left:67.5px;top:261.49px;">Alicia</div><div class="c" style="left:113px;top:257px;width:30px"></div><div class="g" style="left:113px;width:27.5px;text-align:right;top:261.49px">83</div><div class="c" style="left:144px;top:257px;width:40px"></div><div class="g" style="left:145.5px;top:261.49px;">D7210</div><div class="c" style="left:185px;top:257px;width:20px"></div><div class="g" style="left:186.5px;top:261.49px;">24</div><div class="c" style="left:206px;top:257px;width:24px"></div><div class="c" style="left:231px;top:257px;width:44px"></div><div class="g" style="left:232.5px;top:261.49px;">BRO00</div><div class="c" style="left:276px;top:257px;width:46px"></div><div class="g" style="left:276px;width:43.5px;text-align:right;top:261.49px">139.00</div><div class="c" style="left:323px;top:257px;width:46px"></div><div class="g" style="left:323px;width:43.5px;text-align:right;top:261.49px">139.00</div><div class="c" style="left:370px;top:257px;width:46px"></div><div class="c" style="left:417px;top:257px;width:46px"></div><div class="c" style="left:464px;top:257px;width:46px"></div><div class="c" style="left:511px;top:257px;width:46px"></div><div class="c" style="left:558px;top:257px;width:46px"></div><div class="c" style="left:605px;top:257px;width:46px"></div><div class="c" style="left:652px;top:257px;width:46px"></div><div class="c" style="left:699px;top:257px;width:46px"></div><div class="c" style="left:746px;top:257px;width:55px"></div><div class="c" style="left:802px;top:257px;width:52px"></div><div class="c" style="left:1px;top:274px;width:64px"></div><div class="g" style="left:2.5px;top:278.49px;">7/1/2020</div><div class="c" style="left:66px;top:274px;width:46px"></div><div class="g" style="left:67.5px;top:278.49px;">Alicia</div><div class="c" style="left:113px;top:274px;width:30px"></div><div class="g" style="left:113px;width:27.5px;text-align:right;top:278.49px">83</div><div class="c" style="left:144px;top:274px;width:40px"></div><div class="g" style="left:145.5px;top:278.49px;">D7210</div><div class="c" style="left:185px;top:274px;width:20px"></div><div class="g" style="left:186.5px;top:278.49px;">25</div><div class="c" style="left:206px;top:274px;width:24px"></div><div class="c" style="left:231px;top:274px;width:44px"></div><div class="g" style="left:232.5px;top:278.49px;">BRO00</div><div class="c" style="left:276px;top:274px;width:46px"></div><div class="g" style="left:276px;width:43.5px;text-align:right;top:278.49px">139.00</div><div class="c" style="left:323px;top:274px;width:46px"></div><div class="g" style="left:323px;width:43.5px;text-align:right;top:278.49px">139.00</div><div class="c" style="left:370px;top:274px;width:46px"></div><div class="c" style="left:417px;top:274px;width:46px"></div><div class="c" style="left:464px;top:274px;width:46px"></div><div class="c" style="left:511px;top:274px;width:46px"></div><div class="c" style="left:558px;top:274px;width:46px"></div><div class="c" style="left:605px;top:274px;width:46px"></div><div class="c" style="left:652px;top:274px;width:46px"></div><div class="c" style="left:699px;top:274px;width:46px"></div><div class="c" style="left:746px;top:274px;width:55px"></div><div class="c" style="left:802px;top:274px;width:52px"></div><div class="c" style="left:1px;top:291px;width:64px"></div><div class="g" style="left:2.5px;top:295.49px;">7/1/2020</div><div class="c" style="left:66px;top:291px;width:46px"></div><div class="g" style="left:67.5px;top:295.49px;">Alicia</div><div class="c" style="left:113px;top:291px;width:30px"></div><div class="g" style="left:113px;width:27.5px;text-align:right;top:295.49px">83</div><div class="c" style="left:144px;top:291px;width:40px"></div><div class="g" style="left:145.5px;top:295.49px;">D7210</div><div class="c" style="left:185px;top:291px;width:20px"></div><div class="g" style="left:186.5px;top:295.49px;">26</div><div class="c" style="left:206px;top:291px;width:24px"></div><div class="c" style="left:231px;top:291px;width:44px"></div><div class="g" style="left:232.5px;top:295.49px;">BRO00</div><div class="c" style="left:276px;top:291px;width:46px"></div><div class="g" style="left:276px;width:43.5px;text-align:right;top:295.49px">139.00</div><div class="c" style="left:323px;top:291px;width:46px"></div><div class="g" style="left:323px;width:43.5px;text-align:right;top:295.49px">139.00</div><div class="c" style="left:370px;top:291px;width:46px"></div><div class="c" style="left:417px;top:291px;width:46px"></div><div class="c" style="left:464px;top:291px;width:46px"></div><div class="c" style="left:511px;top:291px;width:46px"></div><div class="c" style="left:558px;top:291px;width:46px"></div><div class="c" style="left:605px;top:291px;width:46px"></div><div class="c" style="left:652px;top:291px;width:46px"></div><div class="c" style="left:699px;top:291px;width:46px"></div><div class="c" style="left:746px;top:291px;width:55px"></div><div class="c" style="left:802px;top:291px;width:52px"></div><div class="c" style="left:1px;top:308px;width:64px"></div><div class="g" style="left:2.5px;top:312.49px;">7/1/2020</div><div class="c" style="left:66px;top:308px;width:46px"></div><div class="g" style="left:67.5px;top:312.49px;">Alicia</div><div class="c" style="left:113px;top:308px;width:30px"></div><div class="g" style="left:113px;width:27.5px;text-align:right;top:312.49px">83</div><div class="c" style="left:144px;top:308px;width:40px"></div><div class="g" style="left:145.5px;top:312.49px;">D7210</div><div class="c" style="left:185px;top:308px;width:20px"></div><div class="g" style="left:186.5px;top:312.49px;">27</div><div class="c" style="left:206px;top:308px;width:24px"></div><div class="c" style="left:231px;top:308px;width:44px"></div><div class="g" style="left:232.5px;top:312.49px;">BRO00</div><div class="c" style="left:276px;top:308px;width:46px"></div><div class="g" style="left:276px;width:43.5px;text-align:right;top:312.49px">139.00</div><div class="c" style="left:323px;top:308px;width:46px"></div><div class="g" style="left:323px;width:43.5px;text-align:right;top:312.49px">139.00</div><div class="c" style="left:370px;top:308px;width:46px"></div><div class="c" style="left:417px;top:308px;width:46px"></div><div class="c" style="left:464px;top:308px;width:46px"></div><div class="c" style="left:511px;top:308px;width:46px"></div><div class="c" style="left:558px;top:308px;width:46px"></div><div class="c" style="left:605px;top:308px;width:46px"></div><div class="c" style="left:652px;top:308px;width:46px"></div><div class="c" style="left:699px;top:308px;width:46px"></div><div class="c" style="left:746px;top:308px;width:55px"></div><div class="c" style="left:802px;top:308px;width:52px"></div><div class="c" style="left:1px;top:325px;width:64px"></div><div class="g" style="left:2.5px;top:329.49px;">7/1/2020</div><div class="c" style="left:66px;top:325px;width:46px"></div><div class="g" style="left:67.5px;top:329.49px;">Alicia</div><div class="c" style="left:113px;top:325px;width:30px"></div><div class="g" style="left:113px;width:27.5px;text-align:right;top:329.49px">83</div><div class="c" style="left:144px;top:325px;width:40px"></div><div class="g" style="left:145.5px;top:329.49px;">D7210</div><div class="c" style="left:185px;top:325px;width:20px"></div><div class="g" style="left:186.5px;top:329.49px;">28</div><div class="c" style="left:206px;top:325px;width:24px"></div><div class="c" style="left:231px;top:325px;width:44px"></div><div class="g" style="left:232.5px;top:329.49px;">BRO00</div><div class="c" style="left:276px;top:325px;width:46px"></div><div class="g" style="left:276px;width:43.5px;text-align:right;top:329.49px">139.00</div><div class="c" style="left:323px;top:325px;width:46px"></div><div class="g" style="left:323px;width:43.5px;text-align:right;top:329.49px">139.00</div><div class="c" style="left:370px;top:325px;width:46px"></div><div class="c" style="left:417px;top:325px;width:46px"></div><div class="c" style="left:464px;top:325px;width:46px"></div><div class="c" style="left:511px;top:325px;width:46px"></div><div class="c" style="left:558px;top:325px;width:46px"></div><div class="c" style="left:605px;top:325px;width:46px"></div><div class="c" style="left:652px;top:325px;width:46px"></div><div class="c" style="left:699px;top:325px;width:46px"></div><div class="c" style="left:746px;top:325px;width:55px"></div><div class="c" style="left:802px;top:325px;width:52px"></div><div class="c" style="left:1px;top:342px;width:64px"></div><div class="g" style="left:2.5px;top:346.49px;">7/1/2020</div><div class="c" style="left:66px;top:342px;width:46px"></div><div class="g" style="left:67.5px;top:346.49px;">Alicia</div><div class="c" style="left:113px;top:342px;width:30px"></div><div class="g" style="left:113px;width:27.5px;text-align:right;top:346.49px">83</div><div class="c" style="left:144px;top:342px;width:40px"></div><div class="g" style="left:145.5px;top:346.49px;">D7210</div><div class="c" style="left:185px;top:342px;width:20px"></div><div class="g" style="left:186.5px;top:346.49px;">29</div><div class="c" style="left:206px;top:342px;width:24px"></div><div class="c" style="left:231px;top:342px;width:44px"></div><div class="g" style="left:232.5px;top:346.49px;">BRO00</div><div class="c" style="left:276px;top:342px;width:46px"></div><div class="g" style="left:276px;width:43.5px;text-align:right;top:346.49px">139.00</div><div class="c" style="left:323px;top:342px;width:46px"></div><div class="g" style="left:323px;width:43.5px;text-align:right;top:346.49px">111.20</div><div class="c" style="left:370px;top:342px;width:46px"></div><div class="c" style="left:417px;top:342px;width:46px"></div><div class="c" style="left:464px;top:342px;width:46px"></div><div class="g" style="left:464px;width:43.5px;text-align:right;top:346.49px">27.80</div><div class="c" style="left:511px;top:342px;width:46px"></div><div class="c" style="left:558px;top:342px;width:46px"></div><div class="c" style="left:605px;top:342px;width:46px"></div><div class="c" style="left:652px;top:342px;width:46px"></div><div class="c" style="left:699px;top:342px;width:46px"></div><div class="c" style="left:746px;top:342px;width:55px"></div><div class="c" style="left:802px;top:342px;width:52px"></div><div class="c" style="left:1px;top:359px;width:64px"></div><div class="g" style="left:2.5px;top:363.49px;">7/1/2020</div><div class="c" style="left:66px;top:359px;width:46px"></div><div class="g" style="left:67.5px;top:363.49px;">Alicia</div><div class="c" style="left:113px;top:359px;width:30px"></div><div class="g" style="left:113px;width:27.5px;text-align:right;top:363.49px">83</div><div class="c" style="left:144px;top:359px;width:40px"></div><div class="g" style="left:145.5px;top:363.49px;">D7210</div><div class="c" style="left:185px;top:359px;width:20px"></div><div class="g" style="left:186.5px;top:363.49px;">30</div><div class="c" style="left:206px;top:359px;width:24px"></div><div class="c" style="left:231px;top:359px;width:44px"></div><div class="g" style="left:232.5px;top:363.49px;">BRO00</div><div class="c" style="left:276px;top:359px;width:46px"></div><div class="g" style="left:276px;width:43.5px;text-align:right;top:363.49px">139.00</div><div class="c" style="left:323px;top:359px;width:46px"></div><div class="g" style="left:323px;width:43.5px;text-align:right;top:363.49px">111.20</div><div class="c" style="left:370px;top:359px;width:46px"></div><div class="c" style="left:417px;top:359px;width:46px"></div><div class="c" style="left:464px;top:359px;width:46px"></div><div class="g" style="left:464px;width:43.5px;text-align:right;top:363.49px">27.80</div><div class="c" style="left:511px;top:359px;width:46px"></div><div class="c" style="left:558px;top:359px;width:46px"></div><div class="c" style="left:605px;top:359px;width:46px"></div><div class="c" style="left:652px;top:359px;width:46px"></div><div class="c" style="left:699px;top:359px;width:46px"></div><div class="c" style="left:746px;top:359px;width:55px"></div><div class="c" style="left:802px;top:359px;width:52px"></div><div class="c" style="left:1px;top:376px;width:64px"></div><div class="g" style="left:2.5px;top:380.49px;">7/1/2020</div><div class="c" style="left:66px;top:376px;width:46px"></div><div class="g" style="left:67.5px;top:380.49px;">Alicia</div><div class="c" style="left:113px;top:376px;width:30px"></div><div class="g" style="left:113px;width:27.5px;text-align:right;top:380.49px">83</div><div class="c" style="left:144px;top:376px;width:40px"></div><div class="g" style="left:145.5px;top:380.49px;">D7210</div><div class="c" style="left:185px;top:376px;width:20px"></div><div class="g" style="left:186.5px;top:380.49px;">31</div><div class="c" style="left:206px;top:376px;width:24px"></div><div class="c" style="left:231px;top:376px;width:44px"></div><div class="g" style="left:232.5px;top:380.49px;">BRO00</div><div class="c" style="left:276px;top:376px;width:46px"></div><div class="g" style="left:276px;width:43.5px;text-align:right;top:380.49px">139.00</div><div class="c" style="left:323px;top:376px;width:46px"></div><div class="g" style="left:323px;width:43.5px;text-align:right;top:380.49px">111.20</div><div class="c" style="left:370px;top:376px;width:46px"></div><div class="c" style="left:417px;top:376px;width:46px"></div><div class="c" style="left:464px;top:376px;width:46px"></div><div class="g" style="left:464px;width:43.5px;text-align:right;top:380.49px">27.80</div><div class="c" style="left:511px;top:376px;width:46px"></div><div class="c" style="left:558px;top:376px;width:46px"></div><div class="c" style="left:605px;top:376px;width:46px"></div><div class="c" style="left:652px;top:376px;width:46px"></div><div class="c" style="left:699px;top:376px;width:46px"></div><div class="c" style="left:746px;top:376px;width:55px"></div><div class="c" style="left:802px;top:376px;width:52px"></div><div class="c" style="left:1px;top:393px;width:64px"></div><div class="g" style="left:2.5px;top:397.49px;">7/1/2020</div><div class="c" style="left:66px;top:393px;width:46px"></div><div class="g" style="left:67.5px;top:397.49px;">Alicia</div><div class="c" style="left:113px;top:393px;width:30px"></div><div class="g" style="left:113px;width:27.5px;text-align:right;top:397.49px">83</div><div class="c" style="left:144px;top:393px;width:40px"></div><div class="g" style="left:145.5px;top:397.49px;">D7210</div><div class="c" style="left:185px;top:393px;width:20px"></div><div class="g" style="left:186.5px;top:397.49px;">32</div><div class="c" style="left:206px;top:393px;width:24px"></div><div class="c" style="left:231px;top:393px;width:44px"></div><div class="g" style="left:232.5px;top:397.49px;">BRO00</div><div class="c" style="left:276px;top:393px;width:46px"></div><div class="g" style="left:276px;width:43.5px;text-align:right;top:397.49px">139.00</div><div class="c" style="left:323px;top:393px;width:46px"></div><div class="g" style="left:323px;width:43.5px;text-align:right;top:397.49px">111.20</div><div class="c" style="left:370px;top:393px;width:46px"></div><div class="c" style="left:417px;top:393px;width:46px"></div><div class="c" style="left:464px;top:393px;width:46px"></div><div class="g" style="left:464px;width:43.5px;text-align:right;top:397.49px">27.80</div><div class="c" style="left:511px;top:393px;width:46px"></div><div class="c" style="left:558px;top:393px;width:46px"></div><div class="c" style="left:605px;top:393px;width:46px"></div><div class="c" style="left:652px;top:393px;width:46px"></div><div class="c" style="left:699px;top:393px;width:46px"></div><div class="c" style="left:746px;top:393px;width:55px"></div><div class="c" style="left:802px;top:393px;width:52px"></div><div class="c" style="left:1px;top:410px;width:64px"></div><div class="g" style="left:2.5px;top:414.49px;">7/1/2020</div><div class="c" style="left:66px;top:410px;width:46px"></div><div class="g" style="left:67.5px;top:414.49px;">Alicia</div><div class="c" style="left:113px;top:410px;width:30px"></div><div class="g" style="left:113px;width:27.5px;text-align:right;top:414.49px">83</div><div class="c" style="left:144px;top:410px;width:40px"></div><div class="g" style="left:145.5px;top:414.49px;">D4341</div><div class="c" style="left:185px;top:410px;width:20px"></div><div class="g" style="left:186.5px;top:414.49px;">UR</div><div class="c" style="left:206px;top:410px;width:24px"></div><div class="c" style="left:231px;top:410px;width:44px"></div><div class="g" style="left:232.5px;top:414.49px;">BRO00</div><div class="c" style="left:276px;top:410px;width:46px"></div><div class="g" style="left:276px;width:43.5px;text-align:right;top:414.49px">112.50</div><div class="c" style="left:323px;top:410px;width:46px"></div><div class="g" style="left:323px;width:43.5px;text-align:right;top:414.49px">90.00</div><div class="c" style="left:370px;top:410px;width:46px"></div><div class="c" style="left:417px;top:410px;width:46px"></div><div class="c" style="left:464px;top:410px;width:46px"></div><div class="g" style="left:464px;width:43.5px;text-align:right;top:414.49px">22.50</div><div class="c" style="left:511px;top:410px;width:46px"></div><div class="c" style="left:558px;top:410px;width:46px"></div><div class="c" style="left:605px;top:410px;width:46px"></div><div class="c" style="left:652px;top:410px;width:46px"></div><div class="c" style="left:699px;top:410px;width:46px"></div><div class="c" style="left:746px;top:410px;width:55px"></div><div class="c" style="left:802px;top:410px;width:52px"></div><div class="c" style="left:1px;top:427px;width:64px"></div><div class="g" style="left:2.5px;top:431.49px;">7/1/2020</div><div class="c" style="left:66px;top:427px;width:46px"></div><div class="g" style="left:67.5px;top:431.49px;">Alicia</div><div class="c" style="left:113px;top:427px;width:30px"></div><div class="g" style="left:113px;width:27.5px;text-align:right;top:431.49px">83</div><div class="c" style="left:144px;top:427px;width:40px"></div><div class="g" style="left:145.5px;top:431.49px;">D4341</div><div class="c" style="left:185px;top:427px;width:20px"></div><div class="g" style="left:186.5px;top:431.49px;">LR</div><div class="c" style="left:206px;top:427px;width:24px"></div><div class="c" style="left:231px;top:427px;width:44px"></div><div class="g" style="left:232.5px;top:431.49px;">BRO00</div><div class="c" style="left:276px;top:427px;width:46px"></div><div class="g" style="left:276px;width:43.5px;text-align:right;top:431.49px">112.50</div><div class="c" style="left:323px;top:427px;width:46px"></div><div class="g" style="left:323px;width:43.5px;text-align:right;top:431.49px">90.00</div><div class="c" style="left:370px;top:427px;width:46px"></div><div class="c" style="left:417px;top:427px;width:46px"></div><div class="c" style="left:464px;top:427px;width:46px"></div><div class="g" style="left:464px;width:43.5px;text-align:right;top:431.49px">22.50</div><div class="c" style="left:511px;top:427px;width:46px"></div><div class="c" style="left:558px;top:427px;width:46px"></div><div class="c" style="left:605px;top:427px;width:46px"></div><div class="c" style="left:652px;top:427px;width:46px"></div><div class="c" style="left:699px;top:427px;width:46px"></div><div class="c" style="left:746px;top:427px;width:55px"></div><div class="c" style="left:802px;top:427px;width:52px"></div><div class="c" style="left:1px;top:444px;width:64px"></div><div class="g" style="left:2.5px;top:448.49px;">7/1/2020</div><div class="c" style="left:66px;top:444px;width:46px"></div><div class="g" style="left:67.5px;top:448.49px;">Alicia</div><div class="c" style="left:113px;top:444px;width:30px"></div><div class="g" style="left:113px;width:27.5px;text-align:right;top:448.49px">83</div><div class="c" style="left:144px;top:444px;width:40px"></div><div class="g" style="left:145.5px;top:448.49px;">D4341</div><div class="c" style="left:185px;top:444px;width:20px"></div><div class="g" style="left:186.5px;top:448.49px;">UL</div><div class="c" style="left:206px;top:444px;width:24px"></div><div class="c" style="left:231px;top:444px;width:44px"></div><div class="g" style="left:232.5px;top:448.49px;">BRO00</div><div class="c" style="left:276px;top:444px;width:46px"></div><div class="g" style="left:276px;width:43.5px;text-align:right;top:448.49px">112.50</div><div class="c" style="left:323px;top:444px;width:46px"></div><div class="g" style="left:323px;width:43.5px;text-align:right;top:448.49px">90.00</div><div class="c" style="left:370px;top:444px;width:46px"></div><div class="c" style="left:417px;top:444px;width:46px"></div><div class="c" style="left:464px;top:444px;width:46px"></div><div class="g" style="left:464px;width:43.5px;text-align:right;top:448.49px">22.50</div><div class="c" style="left:511px;top:444px;width:46px"></div><div class="c" style="left:558px;top:444px;width:46px"></div><div class="c" style="left:605px;top:444px;width:46px"></div><div class="c" style="left:652px;top:444px;width:46px"></div><div class="c" style="left:699px;top:444px;width:46px"></div><div class="c" style="left:746px;top:444px;width:55px"></div><div class="c" style="left:802px;top:444px;width:52px"></div><div class="c" style="left:1px;top:461px;width:64px"></div><div class="g" style="left:2.5px;top:465.49px;">7/1/2020</div><div class="c" style="left:66px;top:461px;width:46px"></div><div class="g" style="left:67.5px;top:465.49px;">Alicia</div><div class="c" style="left:113px;top:461px;width:30px"></div><div class="g" style="left:113px;width:27.5px;text-align:right;top:465.49px">83</div><div class="c" style="left:144px;top:461px;width:40px"></div><div class="g" style="left:145.5px;top:465.49px;">D4341</div><div class="c" style="left:185px;top:461px;width:20px"></div><div class="g" style="left:186.5px;top:465.49px;">LL</div><div class="c" style="left:206px;top:461px;width:24px"></div><div class="c" style="left:231px;top:461px;width:44px"></div><div class="g" style="left:232.5px;top:465.49px;">BRO00</div><div class="c" style="left:276px;top:461px;width:46px"></div><div class="g" style="left:276px;width:43.5px;text-align:right;top:465.49px">112.50</div><div class="c" style="left:323px;top:461px;width:46px"></div><div class="g" style="left:323px;width:43.5px;text-align:right;top:465.49px">90.00</div><div class="c" style="left:370px;top:461px;width:46px"></div><div class="c" style="left:417px;top:461px;width:46px"></div><div class="c" style="left:464px;top:461px;width:46px"></div><div class="g" style="left:464px;width:43.5px;text-align:right;top:465.49px">22.50</div><div class="c" style="left:511px;top:461px;width:46px"></div><div class="c" style="left:558px;top:461px;width:46px"></div><div class="c" style="left:605px;top:461px;width:46px"></div><div class="c" style="left:652px;top:461px;width:46px"></div><div class="c" style="left:699px;top:461px;width:46px"></div><div class="c" style="left:746px;top:461px;width:55px"></div><div class="c" style="left:802px;top:461px;width:52px"></div><div class="c" style="left:1px;top:478px;width:64px"></div><div class="g" style="left:2.5px;top:482.49px;">7/1/2020</div><div class="c" style="left:66px;top:478px;width:46px"></div><div class="g" style="left:67.5px;top:482.49px;">Alicia</div><div class="c" style="left:113px;top:478px;width:30px"></div><div class="g" style="left:113px;width:27.5px;text-align:right;top:482.49px">83</div><div class="c" style="left:144px;top:478px;width:40px"></div><div class="g" style="left:145.5px;top:482.49px;">D0180</div><div class="c" style="left:185px;top:478px;width:20px"></div><div class="c" style="left:206px;top:478px;width:24px"></div><div class="c" style="left:231px;top:478px;width:44px"></div><div class="g" style="left:232.5px;top:482.49px;">BRO00</div><div class="c" style="left:276px;top:478px;width:46px"></div><div class="g" style="left:276px;width:43.5px;text-align:right;top:482.49px">60.00</div><div class="c" style="left:323px;top:478px;width:46px"></div><div class="g" style="left:323px;width:43.5px;text-align:right;top:482.49px">60.00</div><div class="c" style="left:370px;top:478px;width:46px"></div><div class="c" style="left:417px;top:478px;width:46px"></div><div class="c" style="left:464px;top:478px;width:46px"></div><div class="c" style="left:511px;top:478px;width:46px"></div><div class="c" style="left:558px;top:478px;width:46px"></div><div class="c" style="left:605px;top:478px;width:46px"></div><div class="c" style="left:652px;top:478px;width:46px"></div><div class="c" style="left:699px;top:478px;width:46px"></div><div class="c" style="left:746px;top:478px;width:55px"></div><div class="c" style="left:802px;top:478px;width:52px"></div><div class="c" style="left:1px;top:495px;width:64px"></div><div class="g" style="left:2.5px;top:499.49px;">7/1/2020</div><div class="c" style="left:66px;top:495px;width:46px"></div><div class="g" style="left:67.5px;top:499.49px;">Alicia</div><div class="c" style="left:113px;top:495px;width:30px"></div><div class="g" style="left:113px;width:27.5px;text-align:right;top:499.49px">83</div><div class="c" style="left:144px;top:495px;width:40px"></div><div class="g" style="left:145.5px;top:499.49px;">D4381</div><div class="c" style="left:185px;top:495px;width:20px"></div><div class="c" style="left:206px;top:495px;width:24px"></div><div class="c" style="left:231px;top:495px;width:44px"></div><div class="g" style="left:232.5px;top:499.49px;">BRO00</div><div class="c" style="left:276px;top:495px;width:46px"></div><div class="g" style="left:276px;width:43.5px;text-align:right;top:499.49px">49.50</div><div class="c" style="left:323px;top:495px;width:46px"></div><div class="g" style="left:323px;width:43.5px;text-align:right;top:499.49px">39.60</div><div class="c" style="left:370px;top:495px;width:46px"></div><div class="c" style="left:417px;top:495px;width:46px"></div><div class="c" style="left:464px;top:495px;width:46px"></div><div class="g" style="left:464px;width:43.5px;text-align:right;top:499.49px">9.90</div><div class="c" style="left:511px;top:495px;width:46px"></div><div class="c" style="left:558px;top:495px;width:46px"></div><div class="c" style="left:605px;top:495px;width:46px"></div><div class="c" style="left:652px;top:495px;width:46px"></div><div class="c" style="left:699px;top:495px;width:46px"></div><div class="c" style="left:746px;top:495px;width:55px"></div><div class="c" style="left:802px;top:495px;width:52px"></div><div class="c" style="left:1px;top:512px;width:64px"></div><div class="g" style="left:2.5px;top:516.49px;">7/1/2020</div><div class="c" style="left:66px;top:512px;width:46px"></div><div class="g" style="left:67.5px;top:516.49px;">Alicia</div><div class="c" style="left:113px;top:512px;width:30px"></div><div class="g" style="left:113px;width:27.5px;text-align:right;top:516.49px">83</div><div class="c" style="left:144px;top:512px;width:40px"></div><div class="g" style="left:145.5px;top:516.49px;">D6104</div><div class="c" style="left:185px;top:512px;width:20px"></div><div class="c" style="left:206px;top:512px;width:24px"></div><div class="c" style="left:231px;top:512px;width:44px"></div><div class="g" style="left:232.5px;top:516.49px;">BRO00</div><div class="c" style="left:276px;top:512px;width:46px"></div><div class="c" style="left:323px;top:512px;width:46px"></div><div class="c" style="left:370px;top:512px;width:46px"></div><div class="c" style="left:417px;top:512px;width:46px"></div><div class="c" style="left:464px;top:512px;width:46px"></div><div class="c" style="left:511px;top:512px;width:46px"></div><div class="c" style="left:558px;top:512px;width:46px"></div><div class="c" style="left:605px;top:512px;width:46px"></div><div class="c" style="left:652px;top:512px;width:46px"></div><div class="c" style="left:699px;top:512px;width:46px"></div><div class="c" style="left:746px;top:512px;width:55px"></div><div class="c" style="left:802px;top:512px;width:52px"></div></div>
<div class="b" style="left:154px;top:354px;width:1px;height:584px;background:#222;"></div>
<div class="b" style="left:154px;top:938px;width:856px;height:20px;background:#f0f0f0;border-top:1px solid #000;border-bottom:2px solid #000;border-left:1px solid #222;border-right:1px solid #000;"></div>
<div class="b" style="left:430px;top:941px;width:45px;height:15px;background:#eeeeee;border-top:1px solid #9a9a9a;border-left:1px solid #b8b8b8;"></div>
<div class="t" style="left:412px;width:60px;text-align:right;top:943.64px;font-family:'Liberation Sans', sans-serif;font-size:10.7px;line-height:10.7px;color:#000;">4977.00</div>
<div class="b" style="left:477px;top:941px;width:45px;height:15px;background:#eeeeee;border-top:1px solid #9a9a9a;border-left:1px solid #b8b8b8;"></div>
<div class="t" style="left:459px;width:60px;text-align:right;top:943.64px;font-family:'Liberation Sans', sans-serif;font-size:10.7px;line-height:10.7px;color:#000;">3415.90</div>
<div class="b" style="left:524px;top:941px;width:45px;height:15px;background:#eeeeee;border-top:1px solid #9a9a9a;border-left:1px solid #b8b8b8;"></div>
<div class="t" style="left:506px;width:60px;text-align:right;top:943.64px;font-family:'Liberation Sans', sans-serif;font-size:10.7px;line-height:10.7px;color:#000;">0.00</div>
<div class="b" style="left:571px;top:941px;width:45px;height:15px;background:#eeeeee;border-top:1px solid #9a9a9a;border-left:1px solid #b8b8b8;"></div>
<div class="t" style="left:553px;width:60px;text-align:right;top:943.64px;font-family:'Liberation Sans', sans-serif;font-size:10.7px;line-height:10.7px;color:#000;">0.00</div>
<div class="b" style="left:618px;top:941px;width:45px;height:15px;background:#eeeeee;border-top:1px solid #9a9a9a;border-left:1px solid #b8b8b8;"></div>
<div class="t" style="left:600px;width:60px;text-align:right;top:943.64px;font-family:'Liberation Sans', sans-serif;font-size:10.7px;line-height:10.7px;color:#000;">1561.10</div>
<div class="b" style="left:665px;top:941px;width:45px;height:15px;background:#eeeeee;border-top:1px solid #9a9a9a;border-left:1px solid #b8b8b8;"></div>
<div class="t" style="left:647px;width:60px;text-align:right;top:943.64px;font-family:'Liberation Sans', sans-serif;font-size:10.7px;line-height:10.7px;color:#000;">0.00</div>
<div class="b" style="left:712px;top:941px;width:45px;height:15px;background:#eeeeee;border-top:1px solid #9a9a9a;border-left:1px solid #b8b8b8;"></div>
<div class="t" style="left:694px;width:60px;text-align:right;top:943.64px;font-family:'Liberation Sans', sans-serif;font-size:10.7px;line-height:10.7px;color:#000;">0.00</div>
<div class="b" style="left:759px;top:941px;width:45px;height:15px;background:#eeeeee;border-top:1px solid #9a9a9a;border-left:1px solid #b8b8b8;"></div>
<div class="t" style="left:761px;top:943.64px;font-family:'Liberation Sans', sans-serif;font-size:10.7px;line-height:10.7px;color:#000;">4977.00</div>
<div class="b" style="left:853px;top:941px;width:45px;height:15px;background:#eeeeee;border-top:1px solid #9a9a9a;border-left:1px solid #b8b8b8;"></div>
<div class="t" style="left:835px;width:60px;text-align:right;top:943.64px;font-family:'Liberation Sans', sans-serif;font-size:10.7px;line-height:10.7px;color:#000;">1561.10</div>
<div class="b" style="left:900px;top:941px;width:54px;height:15px;background:#eeeeee;border-top:1px solid #9a9a9a;border-left:1px solid #b8b8b8;"></div>
<div class="t" style="left:891px;width:60px;text-align:right;top:943.64px;font-family:'Liberation Sans', sans-serif;font-size:10.7px;line-height:10.7px;color:#000;">-1561.10</div>
<div class="b" style="left:956px;top:941px;width:51px;height:15px;background:#eeeeee;border-top:1px solid #9a9a9a;border-left:1px solid #b8b8b8;"></div>
<div class="t" style="left:944px;width:60px;text-align:right;top:943.64px;font-family:'Liberation Sans', sans-serif;font-size:10.7px;line-height:10.7px;color:#000;">0.00</div>
<div class="b" style="left:1008px;top:931px;width:58px;height:28px;background:linear-gradient(#d8d8d8,#fafafa);border-top:1px solid #777;border-right:1px solid #777;border-bottom:1px solid #777;"></div>
<div class="b" style="left:1049px;top:932px;width:16px;height:26px;background:linear-gradient(#cfcfcf,#f0f0f0);"></div>
<svg style="left:1051px;top:945px" width="10" height="7" viewBox="0 0 10 7"><path d="M1 1 L5 5 L9 1" stroke="#555" stroke-width="1.8" fill="none"/></svg>
<div class="b" style="left:154px;top:957px;width:854px;height:20px;background:#000;"><div class="b" style="left:1px;top:1px;width:64px;height:18px;background:#ece9d8;"></div><div class="t" style="left:2.5px;top:6.05px;font-family:'Liberation Sans', sans-serif;font-size:10.8px;line-height:10.8px;color:#000;">Date</div>
<div class="b" style="left:65px;top:1px;width:46px;height:18px;background:#ece9d8;"></div><div class="t" style="left:66.5px;top:6.05px;font-family:'Liberation Sans', sans-serif;font-size:10.8px;line-height:10.8px;color:#000;">Name</div>
<div class="b" style="left:112px;top:1px;width:30px;height:18px;background:#ece9d8;"></div><div class="t" style="left:113.5px;top:6.05px;font-family:'Liberation Sans', sans-serif;font-size:10.8px;line-height:10.8px;color:#000;letter-spacing:-0.4px;">Billing</div>
<div class="b" style="left:143px;top:1px;width:40px;height:18px;background:#ece9d8;"></div><div class="t" style="left:144.5px;top:6.05px;font-family:'Liberation Sans', sans-serif;font-size:10.8px;line-height:10.8px;color:#000;">Code</div>
<div class="b" style="left:184px;top:1px;width:20px;height:18px;background:#ece9d8;"></div><div class="t" style="left:185.5px;top:6.05px;font-family:'Liberation Sans', sans-serif;font-size:10.8px;line-height:10.8px;color:#000;">Tth</div>
<div class="b" style="left:205px;top:1px;width:24px;height:18px;background:#ece9d8;"></div><div class="t" style="left:206.5px;top:6.05px;font-family:'Liberation Sans', sans-serif;font-size:10.8px;line-height:10.8px;color:#000;">Surf</div>
<div class="b" style="left:230px;top:1px;width:44px;height:18px;background:#ece9d8;"></div><div class="t" style="left:231.5px;top:6.05px;font-family:'Liberation Sans', sans-serif;font-size:10.8px;line-height:10.8px;color:#000;">Provider</div>
<div class="b" style="left:275px;top:1px;width:46px;height:18px;background:#ece9d8;"></div><div class="t" style="left:276.5px;top:6.05px;font-family:'Liberation Sans', sans-serif;font-size:10.8px;line-height:10.8px;color:#000;">Fee</div>
<div class="b" style="left:322px;top:1px;width:46px;height:18px;background:#ece9d8;"></div><div class="t" style="left:323.5px;top:6.05px;font-family:'Liberation Sans', sans-serif;font-size:10.8px;line-height:10.8px;color:#000;">Ins Est</div>
<div class="b" style="left:369px;top:1px;width:46px;height:18px;background:#ece9d8;"></div><div class="t" style="left:370.5px;top:6.05px;font-family:'Liberation Sans', sans-serif;font-size:10.8px;line-height:10.8px;color:#000;">Ins Adj</div>
<div class="b" style="left:416px;top:1px;width:46px;height:18px;background:#ece9d8;"></div><div class="t" style="left:417.5px;top:6.05px;font-family:'Liberation Sans', sans-serif;font-size:10.8px;line-height:10.8px;color:#000;">Ins Paid</div>
<div class="b" style="left:463px;top:1px;width:46px;height:18px;background:#ece9d8;"></div><div class="t" style="left:464.5px;top:6.05px;font-family:'Liberation Sans', sans-serif;font-size:10.8px;line-height:10.8px;color:#000;">Pat Est</div>
<div class="b" style="left:510px;top:1px;width:46px;height:18px;background:#ece9d8;"></div><div class="t" style="left:511.5px;top:6.05px;font-family:'Liberation Sans', sans-serif;font-size:10.8px;line-height:10.8px;color:#000;">Pat Adj</div>
<div class="b" style="left:557px;top:1px;width:46px;height:18px;background:#ece9d8;"></div><div class="t" style="left:558.5px;top:6.05px;font-family:'Liberation Sans', sans-serif;font-size:10.8px;line-height:10.8px;color:#000;">Pat Paid</div>
<div class="b" style="left:604px;top:1px;width:46px;height:18px;background:#ece9d8;"></div><div class="t" style="left:605.5px;top:6.05px;font-family:'Liberation Sans', sans-serif;font-size:10.8px;line-height:10.8px;color:#000;">Balance</div>
<div class="b" style="left:651px;top:1px;width:46px;height:18px;background:#ece9d8;"></div><div class="t" style="left:652.5px;top:6.05px;font-family:'Liberation Sans', sans-serif;font-size:10.8px;line-height:10.8px;color:#000;">Ins Due</div>
<div class="b" style="left:698px;top:1px;width:46px;height:18px;background:#ece9d8;"></div><div class="t" style="left:699.5px;top:6.05px;font-family:'Liberation Sans', sans-serif;font-size:10.8px;line-height:10.8px;color:#000;">Pat Due</div>
<div class="b" style="left:745px;top:1px;width:55px;height:18px;background:#ece9d8;"></div><div class="t" style="left:746.5px;top:6.05px;font-family:'Liberation Sans', sans-serif;font-size:10.8px;line-height:10.8px;color:#000;">Pmt Today</div>
<div class="b" style="left:801px;top:1px;width:52px;height:18px;background:#ece9d8;"></div><div class="t" style="left:802.5px;top:6.05px;font-family:'Liberation Sans', sans-serif;font-size:10.8px;line-height:10.8px;color:#000;">Adj Today</div>
</div>
<div class="b" style="left:801px;top:988px;width:14px;height:14px;background:#fff;border:1px solid #333;"></div>
<div class="t" style="left:819.5px;top:990.85px;font-family:'Liberation Sans', sans-serif;font-size:10.8px;line-height:10.8px;color:#000;">Default to the Ledger Selection</div>
<div class="b" style="left:677px;top:159px;width:627px;height:773px;background:#fff;border:1px solid #6b6b6b;box-shadow:0 3px 14px 3px rgba(0,0,0,0.22);"></div>
<div class="b" style="left:1301px;top:191px;width:2px;height:740px;background:#6b6b6b;"></div>
<div class="b" style="left:678px;top:191px;width:623px;height:1px;background:#d4d4d4;"></div>
<div class="b" style="left:679px;top:192px;width:1px;height:736px;background:#e2e2e2;"></div>
<div class="b" style="left:678px;top:928px;width:623px;height:1px;background:#6b6b6b;"></div>
<svg style="left:686px;top:166px" width="16" height="16" viewBox="0 0 16 16"><circle cx="8" cy="8" r="7.2" fill="#fff" stroke="#1d2452" stroke-width="1.2"/><text x="3.4" y="12.6" font-family="Liberation Sans" font-weight="700" font-style="italic" font-size="13" fill="#0c1a5c" stroke="#0c1a5c" stroke-width="0.7">D</text></svg>
<div class="t" style="left:707.2px;top:169.15px;font-family:'Liberation Sans', sans-serif;font-size:11.4px;line-height:11.4px;color:#000;">Process Credit Card</div>
<div class="b" style="left:1184px;top:174px;width:11px;height:1px;background:#c8c8c8;"></div>
<div class="b" style="left:1229px;top:169px;width:10px;height:10px;border:1px solid #000;"></div>
<svg style="left:1274px;top:168px" width="12" height="12" viewBox="0 0 12 12"><path d="M0.8 0.8 L11 11 M11 0.8 L0.8 11" stroke="#000" stroke-width="1.1"/></svg>
<div class="t" style="left:690.3px;top:195.40px;font-family:'Liberation Sans', sans-serif;font-size:16.3px;line-height:16.3px;color:#000;font-weight:700;">Card Processed</div>
<div class="t" style="left:697.6px;top:218.11px;font-family:'Liberation Sans', sans-serif;font-size:12.86px;line-height:12.86px;color:#000;">Charged Amount: 1561.10</div>
<div class="t" style="left:697.6px;top:234.11px;font-family:'Liberation Sans', sans-serif;font-size:12.86px;line-height:12.86px;color:#000;">Response: Approval</div>
<div class="b" style="left:693px;top:314px;width:86px;height:24px;background:#0a9bd0;"></div>
<div class="t" style="left:693.0px;width:86px;text-align:center;top:319.58px;font-family:'Liberation Sans', sans-serif;font-size:12.3px;line-height:12.3px;color:#fff;">Hide Receipt</div>
<div class="b" style="left:945px;top:314px;width:74px;height:24px;background:#0a9bd0;"></div>
<div class="t" style="left:945.0px;width:74px;text-align:center;top:319.84px;font-family:'Liberation Sans', sans-serif;font-size:12px;line-height:12px;color:#fff;">Close</div>
<div class="t" style="left:698.2px;top:347.20px;font-family:'Liberation Sans', sans-serif;font-size:17px;line-height:17px;color:#000;font-weight:700;">Receipt</div>
<div class="b" style="left:698px;top:370px;width:336px;height:424px;background:#fff;border-top:2px solid #6a6a6a;border-left:2px solid #6a6a6a;border-right:1px solid #d8d8d8;border-bottom:1px solid #d8d8d8;"></div>
<div class="b" style="left:700px;top:372px;width:333px;height:421px;overflow:hidden;"><div class="t" style="left:105.5px;top:2.29px;font-family:'Liberation Mono', monospace;font-size:13.333px;line-height:13.333px;color:#1c1c1c;">Sale Receipt</div>
<div class="t" style="left:81.5px;top:28.29px;font-family:'Liberation Mono', monospace;font-size:13.333px;line-height:13.333px;color:#1c1c1c;">Dr. Emmett Brown DMD</div>
<div class="t" style="left:9.5px;top:41.29px;font-family:'Liberation Mono', monospace;font-size:13.333px;line-height:13.333px;color:#1c1c1c;">4115 E. Valley Auto Drive, Suite 101,</div>
<div class="t" style="left:97.5px;top:54.29px;font-family:'Liberation Mono', monospace;font-size:13.333px;line-height:13.333px;color:#1c1c1c;">Mesa, AZ  85206</div>
<div class="t" style="left:105.5px;top:67.29px;font-family:'Liberation Mono', monospace;font-size:13.333px;line-height:13.333px;color:#1c1c1c;">(800) 704-8494</div>
<div class="t" style="left:1.5px;top:93.29px;font-family:'Liberation Mono', monospace;font-size:13.333px;line-height:13.333px;color:#1c1c1c;">Batch #             000047</div>
<div class="t" style="left:1.5px;top:106.29px;font-family:'Liberation Mono', monospace;font-size:13.333px;line-height:13.333px;color:#1c1c1c;">Trans ID            000000006378</div>
<div class="t" style="left:1.5px;top:119.29px;font-family:'Liberation Mono', monospace;font-size:13.333px;line-height:13.333px;color:#1c1c1c;">Order ID            201002153049579</div>
<div class="t" style="left:1.5px;top:132.29px;font-family:'Liberation Mono', monospace;font-size:13.333px;line-height:13.333px;color:#1c1c1c;">Trans Type          Purchase</div>
<div class="t" style="left:1.5px;top:145.29px;font-family:'Liberation Mono', monospace;font-size:13.333px;line-height:13.333px;color:#1c1c1c;">Date/Time           2020-10-02 17:32:59</div>
<div class="t" style="left:1.5px;top:158.29px;font-family:'Liberation Mono', monospace;font-size:13.333px;line-height:13.333px;color:#1c1c1c;">Card Type           Visa</div>
<div class="t" style="left:1.5px;top:171.29px;font-family:'Liberation Mono', monospace;font-size:13.333px;line-height:13.333px;color:#1c1c1c;">Card Number         XXXXXXXXXXXX0135</div>
<div class="t" style="left:1.5px;top:184.29px;font-family:'Liberation Mono', monospace;font-size:13.333px;line-height:13.333px;color:#1c1c1c;">Entry Method        MANUAL</div>
<div class="t" style="left:1.5px;top:197.29px;font-family:'Liberation Mono', monospace;font-size:13.333px;line-height:13.333px;color:#1c1c1c;">Approval Code       066164</div>
<div class="t" style="left:1.5px;top:210.29px;font-family:'Liberation Mono', monospace;font-size:13.333px;line-height:13.333px;color:#1c1c1c;">AVS                 R</div>
<div class="t" style="left:1.5px;top:223.29px;font-family:'Liberation Mono', monospace;font-size:13.333px;line-height:13.333px;color:#1c1c1c;">CVV                 P</div>
<div class="t" style="left:1.5px;top:249.29px;font-family:'Liberation Mono', monospace;font-size:13.333px;line-height:13.333px;color:#1c1c1c;">Total Amount        $1561.10</div>
<div class="t" style="left:81.5px;top:275.29px;font-family:'Liberation Mono', monospace;font-size:13.333px;line-height:13.333px;color:#1c1c1c;">Approved - Thank You</div>
<div class="t" style="left:9.5px;top:301.29px;font-family:'Liberation Mono', monospace;font-size:13.333px;line-height:13.333px;color:#1c1c1c;">X____________________________________</div>
<div class="t" style="left:49.5px;top:314.29px;font-family:'Liberation Mono', monospace;font-size:13.333px;line-height:13.333px;color:#1c1c1c;">Signature: Alicia Dieujuste</div>
<div class="t" style="left:1.5px;top:340.29px;font-family:'Liberation Mono', monospace;font-size:13.333px;line-height:13.333px;color:#1c1c1c;">Buyer agrees to pay total amount above</div>
<div class="t" style="left:1.5px;top:353.29px;font-family:'Liberation Mono', monospace;font-size:13.333px;line-height:13.333px;color:#1c1c1c;">according to cardholder&#x27;s agreement with</div>
<div class="t" style="left:1.5px;top:366.29px;font-family:'Liberation Mono', monospace;font-size:13.333px;line-height:13.333px;color:#1c1c1c;">issuer.</div>
<div class="t" style="left:121.5px;top:392.29px;font-family:'Liberation Mono', monospace;font-size:13.333px;line-height:13.333px;color:#1c1c1c;">Thank You!</div>
<div class="t" style="left:105.5px;top:418.29px;font-family:'Liberation Mono', monospace;font-size:13.333px;line-height:13.333px;color:#1c1c1c;">Customer Copy</div>
</div>
<div class="b" style="left:701px;top:808px;width:74px;height:23px;background:#0a9bd0;"></div>
<div class="t" style="left:701.0px;width:74px;text-align:center;top:813.58px;font-family:'Liberation Sans', sans-serif;font-size:12.3px;line-height:12.3px;color:#fff;">Print</div>
<div class="t" style="left:697.6px;top:839.96px;font-family:'Liberation Sans', sans-serif;font-size:12.8px;line-height:12.8px;color:#000;">Selected Printer:</div>
<div class="b" style="left:799px;top:835px;width:236px;height:19px;background:#fff;border:1px solid #e4e4e4;"></div>
<div class="b" style="left:802px;top:837px;width:213px;height:14px;background:#0078d7;"></div>
<div class="b" style="left:802px;top:837px;width:213px;height:14px;overflow:hidden;"><div class="t" style="left:-2px;top:2.29px;font-family:'Liberation Sans', sans-serif;font-size:11px;line-height:11px;color:#fff;letter-spacing:-0.2px;">Brother MFC-L2710DW series</div>
</div>
<div class="b" style="left:1016px;top:837px;width:16px;height:14px;background:#f4f4f4;border-right:1px solid #a0a0a0;border-bottom:1px solid #a0a0a0;border-left:1px solid #fff;border-top:1px solid #fff;"></div>
<svg style="left:1019px;top:841px" width="9" height="5" viewBox="0 0 9 5"><path d="M0 0 L9 0 L4.5 5 Z" fill="#000"/></svg>

</body></html>
